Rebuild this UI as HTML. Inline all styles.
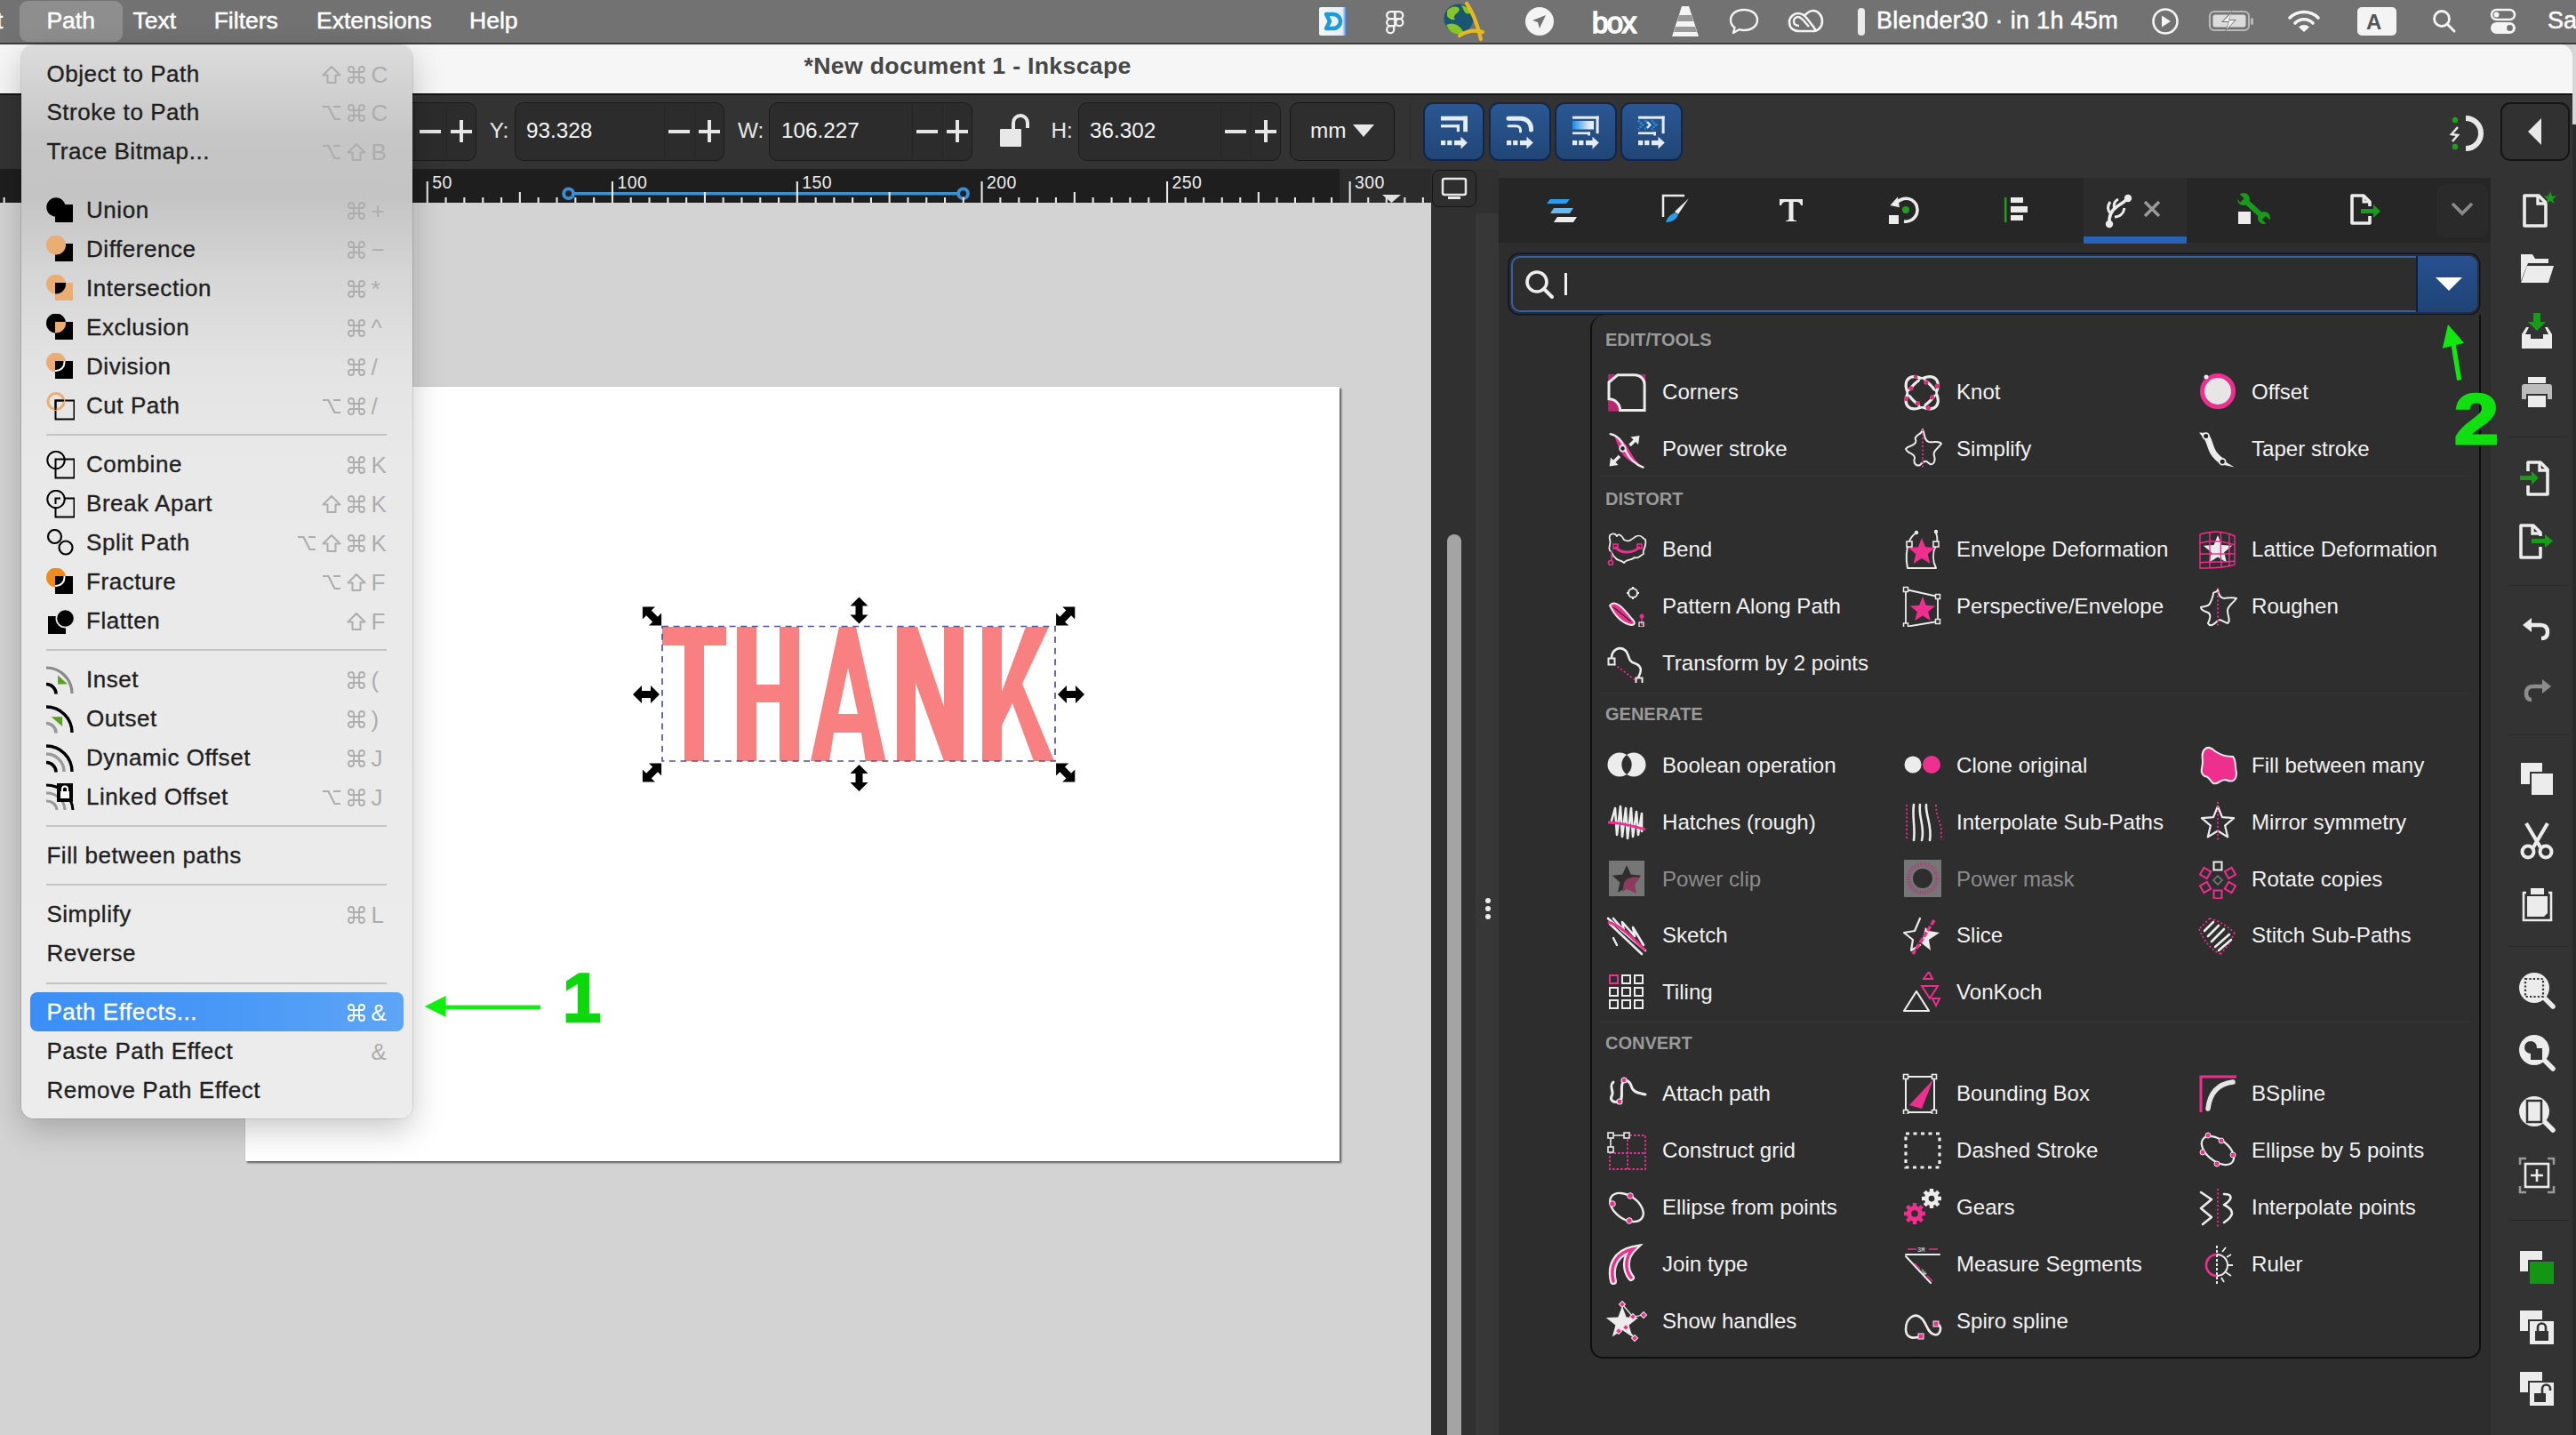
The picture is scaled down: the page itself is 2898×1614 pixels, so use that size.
<!DOCTYPE html><html><head><meta charset="utf-8"><style>html,body{margin:0;padding:0;}body{width:2898px;height:1614px;position:relative;overflow:hidden;background:#d3d3d3;font-family:"Liberation Sans",sans-serif;}</style></head><body>
<div style="position:absolute;left:0px;top:228px;width:1610px;height:1386px;background:#d3d3d3"></div>
<div style="position:absolute;left:276px;top:435px;width:1231px;height:871px;background:#fff;box-shadow:2px 2px 2px rgba(0,0,0,0.55), 0 0 1px rgba(0,0,0,0.25)"></div>
<svg style="position:absolute;left:0;top:0" width="2898" height="1614">
<g fill="#f88080">
<polygon points="745,705 817,705 817,726 792,726 792,856 770,856 770,726 745,726"/>
<polygon points="829,705 851,705 851,770 877,770 877,705 899,705 899,856 877,856 877,790 851,790 851,856 829,856"/>
<path d="M944,705 L963,705 L996.5,856 L973.7,856 L969,824 L938,824 L933,856 L912,856 Z M943,803 L965,803 L954,751 Z" fill-rule="evenodd"/>
<polygon points="1009,705 1032,705 1062,795 1062,705 1084,705 1084,856 1062,856 1030,768 1030,856 1009,856"/>
<polygon points="1105,705 1127,705 1127,778 1154,705 1180,705 1150,769 1186,856 1163,856 1139,791 1127,816 1127,856 1105,856"/>
</g>
<rect x="745" y="704.5" width="442" height="151.5" fill="none" stroke="#52529a" stroke-width="1.7" stroke-dasharray="7,5.6"/>
<polygon points="722.9,682.4 737.0,682.4 732.8,686.6 739.9,693.7 744.1,689.5 744.1,703.6 730.0,703.6 734.2,699.4 727.1,692.3 722.9,696.5" fill="#000"/><polygon points="1188.1,703.6 1188.1,689.5 1192.3,693.7 1199.4,686.6 1195.2,682.4 1209.3,682.4 1209.3,696.5 1205.1,692.3 1198.0,699.4 1202.2,703.6" fill="#000"/><polygon points="722.9,879.6 722.9,865.5 727.1,869.7 734.2,862.6 730.0,858.4 744.1,858.4 744.1,872.5 739.9,868.3 732.8,875.4 737.0,879.6" fill="#000"/><polygon points="1188.1,858.4 1202.2,858.4 1198.0,862.6 1205.1,869.7 1209.3,865.5 1209.3,879.6 1195.2,879.6 1199.4,875.4 1192.3,868.3 1188.1,872.5" fill="#000"/><polygon points="966.5,671.5 976.5,681.5 970.5,681.5 970.5,691.5 976.5,691.5 966.5,701.5 956.5,691.5 962.5,691.5 962.5,681.5 956.5,681.5" fill="#000"/><polygon points="966.5,860.0 976.5,870.0 970.5,870.0 970.5,880.0 976.5,880.0 966.5,890.0 956.5,880.0 962.5,880.0 962.5,870.0 956.5,870.0" fill="#000"/><polygon points="712.0,781.0 722.0,771.0 722.0,777.0 732.0,777.0 732.0,771.0 742.0,781.0 732.0,791.0 732.0,785.0 722.0,785.0 722.0,791.0" fill="#000"/><polygon points="1190.0,781.0 1200.0,771.0 1200.0,777.0 1210.0,777.0 1210.0,771.0 1220.0,781.0 1210.0,791.0 1210.0,785.0 1200.0,785.0 1200.0,791.0" fill="#000"/></svg>
<div style="position:absolute;left:0px;top:0px;width:2898px;height:49px;background:#727272"></div>
<div style="position:absolute;left:0px;top:48px;width:2898px;height:2px;background:#3c3c3c"></div>
<div style="position:absolute;left:22px;top:1px;width:116px;height:46px;background:#8e8e8e;border-radius:9px"></div>
<div style="position:absolute;left:-4px;top:9.57px;font-size:26.5px;line-height:26.5px;color:#fff;font-weight:400;white-space:pre;font-family:'Liberation Sans', sans-serif;-webkit-text-stroke:0.5px #fff">t</div>
<div style="position:absolute;left:52.4px;top:9.57px;font-size:26.5px;line-height:26.5px;color:#fff;font-weight:400;white-space:pre;font-family:'Liberation Sans', sans-serif;-webkit-text-stroke:0.5px #fff">Path</div>
<div style="position:absolute;left:149.5px;top:9.57px;font-size:26.5px;line-height:26.5px;color:#fff;font-weight:400;white-space:pre;font-family:'Liberation Sans', sans-serif;-webkit-text-stroke:0.5px #fff">Text</div>
<div style="position:absolute;left:240.7px;top:9.57px;font-size:26.5px;line-height:26.5px;color:#fff;font-weight:400;white-space:pre;font-family:'Liberation Sans', sans-serif;-webkit-text-stroke:0.5px #fff">Filters</div>
<div style="position:absolute;left:356px;top:9.57px;font-size:26.5px;line-height:26.5px;color:#fff;font-weight:400;white-space:pre;font-family:'Liberation Sans', sans-serif;-webkit-text-stroke:0.5px #fff">Extensions</div>
<div style="position:absolute;left:528px;top:9.57px;font-size:26.5px;line-height:26.5px;color:#fff;font-weight:400;white-space:pre;font-family:'Liberation Sans', sans-serif;-webkit-text-stroke:0.5px #fff">Help</div>
<div style="position:absolute;left:2111px;top:9.54px;font-size:27px;line-height:27px;color:#fff;font-weight:400;white-space:pre;font-family:'Liberation Sans', sans-serif;-webkit-text-stroke:0.5px #fff;letter-spacing:0.3px">Blender30 · in 1h 45m</div>
<div style="position:absolute;left:2866px;top:9.54px;font-size:27px;line-height:27px;color:#fff;font-weight:400;white-space:pre;font-family:'Liberation Sans', sans-serif;-webkit-text-stroke:0.5px #fff">Sa</div>
<div style="position:absolute;left:0px;top:50px;width:2894px;height:56px;background:#f6f6f6;border-top-right-radius:14px"></div>
<div style="position:absolute;left:2894px;top:50px;width:4px;height:1564px;background:#2a2a2a"></div>
<div style="position:absolute;left:2894px;top:50px;width:4px;height:90px;background:#d6d6d6"></div>
<div style="position:absolute;left:904.5px;top:60.90px;font-size:26.7px;line-height:26.7px;color:#474747;font-weight:700;white-space:pre;font-family:'Liberation Sans', sans-serif;letter-spacing:0.3px">*New document 1 - Inkscape</div>
<div style="position:absolute;left:0px;top:106px;width:2894px;height:84px;background:#333333"></div>
<div style="position:absolute;left:0px;top:105px;width:2894px;height:2px;background:#141414"></div>
<div style="position:absolute;left:0px;top:190px;width:1507px;height:38px;background:#1e1e1e"></div>
<div style="position:absolute;left:1507px;top:190px;width:103px;height:38px;background:#2b2b2b"></div>
<div style="position:absolute;left:1610px;top:190px;width:76px;height:1424px;background:#303030"></div>
<div style="position:absolute;left:1660px;top:240px;width:29px;height:1374px;background:#373737"></div>
<div style="position:absolute;left:400px;top:115px;width:135.5px;height:66px;background:#2c2c2c;border:1.5px solid #1b1b1b;border-radius:10px;box-sizing:border-box"></div><div style="position:absolute;left:467px;top:117px;width:1px;height:62px;background:#262626"></div><div style="position:absolute;left:501.6px;top:117px;width:1.0px;height:62px;background:#262626"></div><div style="position:absolute;left:472.3px;top:145.5px;width:24.0px;height:4.0px;background:#e6e6e6"></div><div style="position:absolute;left:506.54999999999995px;top:145.5px;width:24.0px;height:4.0px;background:#e6e6e6"></div><div style="position:absolute;left:516.55px;top:135px;width:4.0px;height:25px;background:#e6e6e6"></div>
<div style="position:absolute;left:550.7px;top:134.93px;font-size:24.3px;line-height:24.3px;color:#e8e8e8;font-weight:400;white-space:pre;font-family:'Liberation Sans', sans-serif;">Y:</div>
<div style="position:absolute;left:579px;top:115px;width:236px;height:66px;background:#2c2c2c;border:1.5px solid #1b1b1b;border-radius:10px;box-sizing:border-box"></div><div style="position:absolute;left:747px;top:117px;width:1px;height:62px;background:#262626"></div><div style="position:absolute;left:781px;top:117px;width:1px;height:62px;background:#262626"></div><div style="position:absolute;left:752.0px;top:145.5px;width:24.0px;height:4.0px;background:#e6e6e6"></div><div style="position:absolute;left:786.0px;top:145.5px;width:24.0px;height:4.0px;background:#e6e6e6"></div><div style="position:absolute;left:796.0px;top:135px;width:4.0px;height:25px;background:#e6e6e6"></div><div style="position:absolute;left:592px;top:134.93px;font-size:24.3px;line-height:24.3px;color:#f4f4f4;font-weight:400;white-space:pre;font-family:'Liberation Sans', sans-serif;">93.328</div>
<div style="position:absolute;left:830px;top:134.93px;font-size:24.3px;line-height:24.3px;color:#e8e8e8;font-weight:400;white-space:pre;font-family:'Liberation Sans', sans-serif;">W:</div>
<div style="position:absolute;left:865px;top:115px;width:229px;height:66px;background:#2c2c2c;border:1.5px solid #1b1b1b;border-radius:10px;box-sizing:border-box"></div><div style="position:absolute;left:1026px;top:117px;width:1px;height:62px;background:#262626"></div><div style="position:absolute;left:1060px;top:117px;width:1px;height:62px;background:#262626"></div><div style="position:absolute;left:1031.0px;top:145.5px;width:24.0px;height:4.0px;background:#e6e6e6"></div><div style="position:absolute;left:1065.0px;top:145.5px;width:24.0px;height:4.0px;background:#e6e6e6"></div><div style="position:absolute;left:1075.0px;top:135px;width:4.0px;height:25px;background:#e6e6e6"></div><div style="position:absolute;left:879px;top:134.93px;font-size:24.3px;line-height:24.3px;color:#f4f4f4;font-weight:400;white-space:pre;font-family:'Liberation Sans', sans-serif;">106.227</div>
<div style="position:absolute;left:1182.5px;top:134.93px;font-size:24.3px;line-height:24.3px;color:#e8e8e8;font-weight:400;white-space:pre;font-family:'Liberation Sans', sans-serif;">H:</div>
<div style="position:absolute;left:1213px;top:115px;width:228px;height:66px;background:#2c2c2c;border:1.5px solid #1b1b1b;border-radius:10px;box-sizing:border-box"></div><div style="position:absolute;left:1373.4px;top:117px;width:1.0px;height:62px;background:#262626"></div><div style="position:absolute;left:1406.8px;top:117px;width:1.0px;height:62px;background:#262626"></div><div style="position:absolute;left:1378.1px;top:145.5px;width:24.0px;height:4.0px;background:#e6e6e6"></div><div style="position:absolute;left:1411.9px;top:145.5px;width:24.0px;height:4.0px;background:#e6e6e6"></div><div style="position:absolute;left:1421.9px;top:135px;width:4.0px;height:25px;background:#e6e6e6"></div><div style="position:absolute;left:1226px;top:134.93px;font-size:24.3px;line-height:24.3px;color:#f4f4f4;font-weight:400;white-space:pre;font-family:'Liberation Sans', sans-serif;">36.302</div>
<svg style="position:absolute;left:1123px;top:128px;" width="38" height="40" viewBox="0 0 38 40"><rect x="2" y="17" width="24" height="20" fill="#e8e8e8" rx="1"/><path d="M17,17 V10 A8,8 0 0 1 33,10 V16" fill="none" stroke="#e8e8e8" stroke-width="4"/></svg>
<div style="position:absolute;left:1451px;top:115px;width:118px;height:66px;background:#2e2e2e;border:1.5px solid #161616;border-radius:10px;box-sizing:border-box"></div>
<div style="position:absolute;left:1474px;top:134.93px;font-size:24.3px;line-height:24.3px;color:#f0f0f0;font-weight:400;white-space:pre;font-family:'Liberation Sans', sans-serif;">mm</div>
<svg style="position:absolute;left:1521px;top:139px;" width="26" height="16" viewBox="0 0 26 16"><path d="M1,1 L25,1 L13,15 Z" fill="#e8e8e8"/></svg>
<div style="position:absolute;left:1586px;top:115px;width:1px;height:66px;background:#2b2b2b"></div>
<div style="position:absolute;left:1601px;top:115.4px;width:69px;height:65.6px;background:linear-gradient(#2a5793,#214677);border:2px solid #10264a;border-radius:11px;box-sizing:border-box"></div>
<svg style="position:absolute;left:1601px;top:115px;" width="70" height="66" viewBox="0 0 70 66"><rect x="20" y="15.7" width="30" height="4.8" fill="#e4ecf6"/><rect x="45.2" y="15.7" width="4.8" height="17.5" fill="#e4ecf6"/><rect x="20" y="25.2" width="21" height="3.2" fill="#e4ecf6"/><rect x="37.8" y="25.2" width="3.2" height="8" fill="#e4ecf6"/><rect x="20" y="43" width="5.2" height="5.2" fill="#e4ecf6"/><rect x="27.2" y="43" width="5.2" height="5.2" fill="#e4ecf6"/><path d="M35,43 H42.5 V38.8 L49.8,45.6 L42.5,52.6 V48.2 H35 Z" fill="#e4ecf6"/></svg>
<div style="position:absolute;left:1675px;top:115.4px;width:69.5px;height:65.6px;background:linear-gradient(#2a5793,#214677);border:2px solid #10264a;border-radius:11px;box-sizing:border-box"></div>
<svg style="position:absolute;left:1675px;top:115px;" width="70" height="66" viewBox="0 0 70 66"><path d="M22,18.2 H36 A11.5,11.5 0 0 1 47.5,29.7 V31" fill="none" stroke="#e4ecf6" stroke-width="5" stroke-linecap="round"/><path d="M22,26.8 H31 A4.5,4.5 0 0 1 35.5,31.3 V33" fill="none" stroke="#e4ecf6" stroke-width="3" stroke-linecap="round"/><rect x="20" y="43" width="5.2" height="5.2" fill="#e4ecf6"/><rect x="27.2" y="43" width="5.2" height="5.2" fill="#e4ecf6"/><path d="M35,43 H42.5 V38.8 L49.8,45.6 L42.5,52.6 V48.2 H35 Z" fill="#e4ecf6"/></svg>
<div style="position:absolute;left:1749px;top:115.4px;width:69.59999999999991px;height:65.6px;background:linear-gradient(#2a5793,#214677);border:2px solid #10264a;border-radius:11px;box-sizing:border-box"></div>
<svg style="position:absolute;left:1749px;top:115px;" width="70" height="66" viewBox="0 0 70 66"><defs><linearGradient id="bg3" x1="0" x2="1"><stop offset="0" stop-color="#1a8ae6"/><stop offset="0.75" stop-color="#d8e6f2"/><stop offset="1" stop-color="#eef2f8"/></linearGradient></defs><rect x="20" y="15.7" width="29.6" height="3" fill="#e4ecf6"/><rect x="46.6" y="15.7" width="3" height="19.5" fill="#e4ecf6"/><rect x="20" y="21" width="24" height="9.5" fill="url(#bg3)"/><rect x="20" y="33.5" width="20" height="2.6" fill="#e4ecf6"/><rect x="37.2" y="33.5" width="2.8" height="4" fill="#e4ecf6"/><rect x="20" y="43" width="5.2" height="5.2" fill="#e4ecf6"/><rect x="27.2" y="43" width="5.2" height="5.2" fill="#e4ecf6"/><path d="M35,43 H42.5 V38.8 L49.8,45.6 L42.5,52.6 V48.2 H35 Z" fill="#e4ecf6"/></svg>
<div style="position:absolute;left:1823px;top:115.4px;width:69.70000000000005px;height:65.6px;background:linear-gradient(#2a5793,#214677);border:2px solid #10264a;border-radius:11px;box-sizing:border-box"></div>
<svg style="position:absolute;left:1823px;top:115px;" width="70" height="66" viewBox="0 0 70 66"><rect x="20" y="15.7" width="29.6" height="3" fill="#e4ecf6"/><rect x="46.6" y="15.7" width="3" height="19.5" fill="#e4ecf6"/><path d="M20,20.5 l5,5 l-5,5 M27.5,20.5 l5,5 l-5,5 M35,20.5 l5,5 l-5,5" fill="none" stroke="#2a8fe0" stroke-width="2.6" stroke-dasharray="2,1.2"/><path d="M30,22 l3.5,3.5 l-3.5,3.5" fill="none" stroke="#e4ecf6" stroke-width="2.2"/><rect x="20" y="33.5" width="20" height="2.6" fill="#e4ecf6"/><rect x="37.2" y="33.5" width="2.8" height="4" fill="#e4ecf6"/><rect x="20" y="43" width="5.2" height="5.2" fill="#e4ecf6"/><rect x="27.2" y="43" width="5.2" height="5.2" fill="#e4ecf6"/><path d="M35,43 H42.5 V38.8 L49.8,45.6 L42.5,52.6 V48.2 H35 Z" fill="#e4ecf6"/></svg>
<svg style="position:absolute;left:2748px;top:126px;" width="52" height="48" viewBox="0 0 52 48"><path d="M26,7 A16,16 0 1 1 26,41" fill="none" stroke="#e8e8e8" stroke-width="6"/><circle cx="14" cy="9" r="3.2" fill="#1ea01e"/><circle cx="14" cy="39" r="3.2" fill="#1ea01e"/><path d="M17,17 L10,25 L17,26 L11,33" fill="none" stroke="#e8e8e8" stroke-width="2.5"/></svg>
<div style="position:absolute;left:2813px;top:115px;width:78px;height:66px;background:#313131;border:2px solid #151515;border-radius:11px;box-sizing:border-box"></div>
<svg style="position:absolute;left:2843px;top:132px;" width="18" height="32" viewBox="0 0 18 32"><path d="M16,1 V31 L1,16 Z" fill="#e8e8e8"/></svg>
<svg style="position:absolute;left:620px;top:200px;" width="480" height="36" viewBox="0 0 480 36"><path d="M19.6,17.75 H463.6" stroke="#3b90d0" stroke-width="3.6"/><circle cx="19.6" cy="17.75" r="5.4" fill="#1a2430" stroke="#3b90d0" stroke-width="3.8"/><circle cx="463.6" cy="17.75" r="5.4" fill="#1a2430" stroke="#3b90d0" stroke-width="3.8"/></svg>
<svg style="position:absolute;left:0px;top:0px;" width="1610" height="228" viewBox="0 0 1610 228"><rect x="479.7" y="204" width="2.1" height="24" fill="#e8e8e8"/><rect x="500.5" y="222" width="2.1" height="6" fill="#e8e8e8"/><rect x="521.3" y="222" width="2.1" height="6" fill="#e8e8e8"/><rect x="542.2" y="222" width="2.1" height="6" fill="#e8e8e8"/><rect x="563.0" y="222" width="2.1" height="6" fill="#e8e8e8"/><rect x="583.8" y="216" width="2.1" height="12" fill="#e8e8e8"/><rect x="604.6" y="222" width="2.1" height="6" fill="#e8e8e8"/><rect x="625.4" y="222" width="2.1" height="6" fill="#e8e8e8"/><rect x="646.3" y="222" width="2.1" height="6" fill="#e8e8e8"/><rect x="667.1" y="222" width="2.1" height="6" fill="#e8e8e8"/><rect x="687.9" y="204" width="2.1" height="24" fill="#e8e8e8"/><rect x="708.7" y="222" width="2.1" height="6" fill="#e8e8e8"/><rect x="729.5" y="222" width="2.1" height="6" fill="#e8e8e8"/><rect x="750.3" y="222" width="2.1" height="6" fill="#e8e8e8"/><rect x="771.1" y="222" width="2.1" height="6" fill="#e8e8e8"/><rect x="791.9" y="216" width="2.1" height="12" fill="#e8e8e8"/><rect x="812.6" y="222" width="2.1" height="6" fill="#e8e8e8"/><rect x="833.4" y="222" width="2.1" height="6" fill="#e8e8e8"/><rect x="854.2" y="222" width="2.1" height="6" fill="#e8e8e8"/><rect x="875.0" y="222" width="2.1" height="6" fill="#e8e8e8"/><rect x="895.8" y="204" width="2.1" height="24" fill="#e8e8e8"/><rect x="916.6" y="222" width="2.1" height="6" fill="#e8e8e8"/><rect x="937.3" y="222" width="2.1" height="6" fill="#e8e8e8"/><rect x="958.1" y="222" width="2.1" height="6" fill="#e8e8e8"/><rect x="978.9" y="222" width="2.1" height="6" fill="#e8e8e8"/><rect x="999.6" y="216" width="2.1" height="12" fill="#e8e8e8"/><rect x="1020.4" y="222" width="2.1" height="6" fill="#e8e8e8"/><rect x="1041.2" y="222" width="2.1" height="6" fill="#e8e8e8"/><rect x="1062.0" y="222" width="2.1" height="6" fill="#e8e8e8"/><rect x="1082.7" y="222" width="2.1" height="6" fill="#e8e8e8"/><rect x="1103.5" y="204" width="2.1" height="24" fill="#e8e8e8"/><rect x="1124.3" y="222" width="2.1" height="6" fill="#e8e8e8"/><rect x="1145.2" y="222" width="2.1" height="6" fill="#e8e8e8"/><rect x="1166.0" y="222" width="2.1" height="6" fill="#e8e8e8"/><rect x="1186.9" y="222" width="2.1" height="6" fill="#e8e8e8"/><rect x="1207.8" y="216" width="2.1" height="12" fill="#e8e8e8"/><rect x="1228.6" y="222" width="2.1" height="6" fill="#e8e8e8"/><rect x="1249.5" y="222" width="2.1" height="6" fill="#e8e8e8"/><rect x="1270.3" y="222" width="2.1" height="6" fill="#e8e8e8"/><rect x="1291.2" y="222" width="2.1" height="6" fill="#e8e8e8"/><rect x="1312.0" y="204" width="2.1" height="24" fill="#e8e8e8"/><rect x="1332.6" y="222" width="2.1" height="6" fill="#e8e8e8"/><rect x="1353.1" y="222" width="2.1" height="6" fill="#e8e8e8"/><rect x="1373.7" y="222" width="2.1" height="6" fill="#e8e8e8"/><rect x="1394.2" y="222" width="2.1" height="6" fill="#e8e8e8"/><rect x="1414.8" y="216" width="2.1" height="12" fill="#e8e8e8"/><rect x="1435.4" y="222" width="2.1" height="6" fill="#e8e8e8"/><rect x="1455.9" y="222" width="2.1" height="6" fill="#e8e8e8"/><rect x="1476.5" y="222" width="2.1" height="6" fill="#e8e8e8"/><rect x="1497.0" y="222" width="2.1" height="6" fill="#e8e8e8"/><rect x="1517.6" y="204" width="2.1" height="24" fill="#e8e8e8"/><rect x="459.0" y="222" width="2.1" height="6" fill="#e8e8e8"/><rect x="438.3" y="222" width="2.1" height="6" fill="#e8e8e8"/><rect x="417.6" y="222" width="2.1" height="6" fill="#e8e8e8"/><rect x="396.9" y="222" width="2.1" height="6" fill="#e8e8e8"/><rect x="376.2" y="216" width="2.1" height="12" fill="#e8e8e8"/><rect x="355.5" y="222" width="2.1" height="6" fill="#e8e8e8"/><rect x="334.8" y="222" width="2.1" height="6" fill="#e8e8e8"/><rect x="314.1" y="222" width="2.1" height="6" fill="#e8e8e8"/><rect x="293.4" y="222" width="2.1" height="6" fill="#e8e8e8"/><rect x="272.7" y="204" width="2.1" height="24" fill="#e8e8e8"/><rect x="252.0" y="222" width="2.1" height="6" fill="#e8e8e8"/><rect x="231.3" y="222" width="2.1" height="6" fill="#e8e8e8"/><rect x="210.6" y="222" width="2.1" height="6" fill="#e8e8e8"/><rect x="189.9" y="222" width="2.1" height="6" fill="#e8e8e8"/><rect x="169.2" y="216" width="2.1" height="12" fill="#e8e8e8"/><rect x="148.5" y="222" width="2.1" height="6" fill="#e8e8e8"/><rect x="127.8" y="222" width="2.1" height="6" fill="#e8e8e8"/><rect x="107.1" y="222" width="2.1" height="6" fill="#e8e8e8"/><rect x="86.4" y="222" width="2.1" height="6" fill="#e8e8e8"/><rect x="65.7" y="204" width="2.1" height="24" fill="#e8e8e8"/><rect x="45.0" y="222" width="2.1" height="6" fill="#e8e8e8"/><rect x="24.3" y="222" width="2.1" height="6" fill="#e8e8e8"/><rect x="3.6" y="222" width="2.1" height="6" fill="#e8e8e8"/><rect x="1538.2" y="222" width="2.1" height="6" fill="#e8e8e8"/><rect x="1558.7" y="222" width="2.1" height="6" fill="#e8e8e8"/><rect x="1579.3" y="222" width="2.1" height="6" fill="#e8e8e8"/><rect x="1599.8" y="222" width="2.1" height="6" fill="#e8e8e8"/></svg>
<div style="position:absolute;left:486.2px;top:196.09px;font-size:19.5px;line-height:19.5px;color:#ececec;font-weight:400;white-space:pre;font-family:'Liberation Sans', sans-serif;letter-spacing:0.4px">50</div>
<div style="position:absolute;left:694.4px;top:196.09px;font-size:19.5px;line-height:19.5px;color:#ececec;font-weight:400;white-space:pre;font-family:'Liberation Sans', sans-serif;letter-spacing:0.4px">100</div>
<div style="position:absolute;left:902.3px;top:196.09px;font-size:19.5px;line-height:19.5px;color:#ececec;font-weight:400;white-space:pre;font-family:'Liberation Sans', sans-serif;letter-spacing:0.4px">150</div>
<div style="position:absolute;left:1110.0px;top:196.09px;font-size:19.5px;line-height:19.5px;color:#ececec;font-weight:400;white-space:pre;font-family:'Liberation Sans', sans-serif;letter-spacing:0.4px">200</div>
<div style="position:absolute;left:1318.5px;top:196.09px;font-size:19.5px;line-height:19.5px;color:#ececec;font-weight:400;white-space:pre;font-family:'Liberation Sans', sans-serif;letter-spacing:0.4px">250</div>
<div style="position:absolute;left:1524.1px;top:196.09px;font-size:19.5px;line-height:19.5px;color:#ececec;font-weight:400;white-space:pre;font-family:'Liberation Sans', sans-serif;letter-spacing:0.4px">300</div>
<svg style="position:absolute;left:1555px;top:219px;" width="22" height="10" viewBox="0 0 22 10"><path d="M0,0 H21 L10.5,9 Z" fill="#e0e0e0"/></svg>
<div style="position:absolute;left:1611px;top:191px;width:50px;height:42px;background:#2e2e2e;border:1.5px solid #151515;border-radius:8px;box-sizing:border-box"></div>
<svg style="position:absolute;left:1620px;top:198px;" width="32" height="28" viewBox="0 0 32 28"><rect x="3" y="3" width="26" height="18" rx="2" fill="none" stroke="#e8e8e8" stroke-width="2.5"/><rect x="9" y="23" width="14" height="3" fill="#e8e8e8"/></svg>
<div style="position:absolute;left:1628px;top:601px;width:16.40000000000009px;height:1013px;background:#a4a4a4;border-radius:8px 8px 0 0"></div>
<svg style="position:absolute;left:1666px;top:1008px;" width="16" height="30" viewBox="0 0 16 30"><circle cx="8" cy="5" r="3" fill="#eee"/><circle cx="8" cy="14" r="3" fill="#eee"/><circle cx="8" cy="23" r="3" fill="#eee"/></svg>
<svg style="position:absolute;left:1482px;top:6px;" width="36" height="36" viewBox="0 0 36 36"><defs><linearGradient id="dl" x1="0" x2="1"><stop offset="0" stop-color="#f4f8fc"/><stop offset="0.85" stop-color="#e4ecf6"/><stop offset="1" stop-color="#2a6fd6"/></linearGradient></defs><rect x="2" y="2" width="31" height="32" rx="2" fill="url(#dl)"/><path d="M10,10 H18 A8,8 0 0 1 18,26 H10 L14,18 Z" fill="none" stroke="#1e9ad6" stroke-width="4.5" stroke-linejoin="round"/></svg>
<svg style="position:absolute;left:1557px;top:11px;" width="24" height="30" viewBox="0 0 24 30"><g fill="none" stroke="#f4f4f4" stroke-width="2.3"><path d="M12.25,2.2 H7.2 A4,4 0 0 0 7.2,10.2 H12.25 Z"/><path d="M12.25,2.2 H17.3 A4,4 0 0 1 17.3,10.2 H12.25 Z"/><path d="M12.25,10.2 H7.2 A4,4 0 0 0 7.2,18.2 H12.25 Z"/><circle cx="17.3" cy="14.2" r="4"/><path d="M12.25,18.2 H7.2 A4,4 0 1 0 11.2,22.2 V18.2"/></g></svg>
<svg style="position:absolute;left:1620px;top:0px;" width="52" height="48" viewBox="0 0 52 48"><circle cx="21" cy="21" r="16.5" fill="#1b5670"/><path d="M8,12 q5,-6 12,-4 q4,3 -1,7 q-5,3 -2,7 q-6,1 -9,-4 z M24,6 q7,1 11,8 q-3,3 -7,0 z M7,28 q6,-3 12,0 q5,3 8,9 q-8,3 -14,-1 q-4,-3 -6,-8z" fill="#86c52a"/><path d="M30,4 Q40,18 46,44" fill="none" stroke="#e8b820" stroke-width="4.2" stroke-linecap="round"/><path d="M22,40 Q34,32 48,36" fill="none" stroke="#e8b820" stroke-width="4.2" stroke-linecap="round"/></svg>
<svg style="position:absolute;left:1715px;top:7px;" width="34" height="34" viewBox="0 0 34 34"><circle cx="17" cy="17" r="16" fill="#f4f4f4"/><path d="M24,10 L9,16 L15,18 L17,25 Z" fill="#727272"/></svg>
<div style="position:absolute;left:1791px;top:8.57px;font-size:33px;line-height:33px;color:#fff;font-weight:400;white-space:pre;font-family:'Liberation Sans', sans-serif;-webkit-text-stroke:1.6px #fff;letter-spacing:-1.5px">box</div>
<svg style="position:absolute;left:1878px;top:5px;" width="36" height="38" viewBox="0 0 36 38"><path d="M14,2 H22 L33,36 H3 Z" fill="#f4f4f4"/><path d="M11,12 H25 L27,19 H9 Z M7,25 H29 L31,31 H5 Z" fill="#9a9a9a"/></svg>
<svg style="position:absolute;left:1944px;top:8px;" width="36" height="32" viewBox="0 0 36 32"><path d="M18,3 C27,3 33,8 33,14.5 C33,21 27,26 18,26 C16,26 14,25.7 12.5,25.2 L6,29 L7.5,23 C4.5,21 3,18 3,14.5 C3,8 9,3 18,3 Z" fill="none" stroke="#f4f4f4" stroke-width="2.4" stroke-linejoin="round"/></svg>
<svg style="position:absolute;left:2010px;top:8px;" width="42" height="32" viewBox="0 0 42 32"><path d="M14,27 C7,27 3,23 3,17 C3,11 8,7 13,7 C17,7 20,9 23,13 L30,22 C32,25 34,27 30,27 Z M20,10 C23,6 26,4 30,4 C35,4 40,9 40,16 C40,22 36,27 29,27" fill="none" stroke="#f4f4f4" stroke-width="2.6"/><path d="M14,21 C10,21 8,19 8,16 C8,13 10,11 13,11 C15,11 17,13 19,15 L25,22" fill="none" stroke="#f4f4f4" stroke-width="2.4"/></svg>
<div style="position:absolute;left:2089.5px;top:9px;width:8.5px;height:30.5px;background:#ececec;border-radius:4px"></div>
<svg style="position:absolute;left:2419px;top:8px;" width="34" height="32" viewBox="0 0 34 32"><circle cx="17" cy="16" r="13.5" fill="none" stroke="#f4f4f4" stroke-width="2.6"/><path d="M13,9.5 L23,16 L13,22.5 Z" fill="#f4f4f4"/></svg>
<svg style="position:absolute;left:2484px;top:10px;" width="56" height="28" viewBox="0 0 56 28"><rect x="2" y="3" width="44" height="21" rx="5" fill="none" stroke="#b8b8b8" stroke-width="2.2"/><rect x="48" y="10" width="3" height="8" rx="1.5" fill="#b8b8b8"/><rect x="5.5" y="6.5" width="37" height="14" rx="2.5" fill="#dcdcdc"/><path d="M27,2 L15,15 H23 L19,26 L32,12 H24 Z" fill="#727272"/><path d="M26,5 L17,14 H24 L21,23 L30,13 H23 Z" fill="#f4f4f4"/></svg>
<svg style="position:absolute;left:2573px;top:9px;" width="38" height="30" viewBox="0 0 38 30"><path d="M3,11 A23,23 0 0 1 35,11" fill="none" stroke="#f4f4f4" stroke-width="3.6" stroke-linecap="round"/><path d="M9,17 A14,14 0 0 1 29,17" fill="none" stroke="#f4f4f4" stroke-width="3.6" stroke-linecap="round"/><path d="M19,27 L13,21.5 A8.5,8.5 0 0 1 25,21.5 Z" fill="#f4f4f4"/></svg>
<div style="position:absolute;left:2651.6px;top:8px;width:44.40000000000009px;height:32px;background:#f4f4f4;border-radius:5px"></div>
<div style="position:absolute;left:2662px;top:12.68px;font-size:24px;line-height:24px;color:#555;font-weight:700;white-space:pre;font-family:'Liberation Sans', sans-serif;">A</div>
<svg style="position:absolute;left:2735px;top:9px;" width="30" height="30" viewBox="0 0 30 30"><circle cx="12" cy="12" r="8.5" fill="none" stroke="#f4f4f4" stroke-width="2.8"/><path d="M18,18 L26,26" stroke="#f4f4f4" stroke-width="3" stroke-linecap="round"/></svg>
<svg style="position:absolute;left:2800px;top:9px;" width="32" height="30" viewBox="0 0 32 30"><rect x="3" y="2" width="26" height="11" rx="5.5" fill="none" stroke="#f4f4f4" stroke-width="2.5"/><circle cx="8.5" cy="7.5" r="3" fill="#f4f4f4"/><rect x="2" y="16" width="28" height="13" rx="6.5" fill="#f4f4f4"/><circle cx="23.5" cy="22.5" r="3.4" fill="#727272"/></svg>
<div style="position:absolute;left:1686px;top:190px;width:1116px;height:10px;background:#333"></div>
<div style="position:absolute;left:1686px;top:200px;width:1116px;height:73px;background:#262626"></div>
<div style="position:absolute;left:1686px;top:273px;width:1116px;height:1341px;background:#2d2d2d"></div>
<div style="position:absolute;left:2802px;top:190px;width:92px;height:1424px;background:#333333"></div>
<div style="position:absolute;left:2344px;top:200px;width:116px;height:73px;background:#2c2c2c"></div>
<div style="position:absolute;left:2344px;top:266px;width:116px;height:8px;background:#2a62b5"></div>
<div style="position:absolute;left:2741px;top:207px;width:58px;height:60px;background:#2a2a2a;border-radius:9px"></div>
<svg style="position:absolute;left:2756px;top:224px;" width="28" height="22" viewBox="0 0 28 22"><path d="M3,5 L14,16 L25,5" fill="none" stroke="#8a8a8a" stroke-width="3.8"/></svg>
<div style="position:absolute;left:1698px;top:286px;width:1091px;height:67px;background:#2d2d2d;border-radius:11px;box-shadow:0 0 0 1.5px #0b1428;"></div>
<div style="position:absolute;left:1700px;top:288px;width:1087px;height:63px;border:2px solid #36609e;border-radius:10px;box-sizing:border-box"></div>
<div style="position:absolute;left:2718px;top:288px;width:69px;height:63px;background:linear-gradient(#27508e,#1f4377);border-top-right-radius:10px;border-bottom-right-radius:10px;border-left:2px solid #0e1f3d;box-sizing:border-box"></div>
<svg style="position:absolute;left:2738px;top:310px;" width="34" height="20" viewBox="0 0 34 20"><path d="M2,2 L32,2 L17,17 Z" fill="#fff"/></svg>
<svg style="position:absolute;left:1714px;top:302px;" width="38" height="38" viewBox="0 0 38 38"><circle cx="15" cy="15" r="11" fill="none" stroke="#eee" stroke-width="3.6"/><path d="M23,23 L32,32" stroke="#eee" stroke-width="4" stroke-linecap="round"/></svg>
<div style="position:absolute;left:1760px;top:307px;width:3px;height:25px;background:#eee"></div>
<div style="position:absolute;left:1789px;top:354px;width:1002px;height:1174px;background:#2e2e2e;border:2px solid #0f0f0f;border-radius:0 0 14px 14px;border-top-left-radius:16px;border-top:none;box-sizing:border-box"></div>
<div style="position:absolute;left:1800px;top:535px;width:980px;height:1px;background:#333333"></div>
<div style="position:absolute;left:1800px;top:779px;width:980px;height:1px;background:#333333"></div>
<div style="position:absolute;left:1800px;top:1149px;width:980px;height:1px;background:#333333"></div>
<div style="position:absolute;left:1806px;top:372.37px;font-size:20px;line-height:20px;color:#9a9a9a;font-weight:700;white-space:pre;font-family:'Liberation Sans', sans-serif;">EDIT/TOOLS</div>
<div style="position:absolute;left:1806px;top:550.87px;font-size:20px;line-height:20px;color:#9a9a9a;font-weight:700;white-space:pre;font-family:'Liberation Sans', sans-serif;">DISTORT</div>
<div style="position:absolute;left:1806px;top:792.87px;font-size:20px;line-height:20px;color:#9a9a9a;font-weight:700;white-space:pre;font-family:'Liberation Sans', sans-serif;">GENERATE</div>
<div style="position:absolute;left:1806px;top:1163.37px;font-size:20px;line-height:20px;color:#9a9a9a;font-weight:700;white-space:pre;font-family:'Liberation Sans', sans-serif;">CONVERT</div>
<div style="position:absolute;left:1870px;top:428.50px;font-size:24.1px;line-height:24.1px;color:#f2f2f2;font-weight:400;white-space:pre;font-family:'Liberation Sans', sans-serif;">Corners</div>
<svg style="position:absolute;left:1807px;top:417px;" width="46" height="46" viewBox="0 0 46 46"><rect x="2.2" y="3.9" width="11" height="11" fill="#b8286e"/><rect x="32.3" y="3.9" width="12" height="10" fill="#b8286e"/><rect x="2.2" y="31.8" width="12.5" height="13.8" fill="#b8286e"/><path d="M3,13 L13,4.7 H32.3 A10.8,10.8 0 0 1 43.1,15.5 V44.4 H15.6 A12.6,12.6 0 0 0 3,31.8 Z" fill="#2e2e2e" stroke="#ececec" stroke-width="3"/></svg>
<div style="position:absolute;left:2201px;top:428.50px;font-size:24.1px;line-height:24.1px;color:#f2f2f2;font-weight:400;white-space:pre;font-family:'Liberation Sans', sans-serif;">Knot</div>
<svg style="position:absolute;left:2140px;top:417px;" width="46" height="46" viewBox="0 0 46 46"><g transform="translate(22.2 24.8)"><ellipse rx="22" ry="13" transform="rotate(45)" fill="none" stroke="#ececec" stroke-width="3.2" stroke-linecap="round" stroke-linejoin="round"/><ellipse rx="22" ry="13" transform="rotate(-45)" fill="none" stroke="#ececec" stroke-width="3.2" stroke-linecap="round" stroke-linejoin="round"/><circle cx="-12.6" cy="0" r="2.6" fill="#2e2e2e"/><circle cx="12.6" cy="0" r="2.6" fill="#2e2e2e"/><circle cx="0" cy="-12.6" r="2.6" fill="#2e2e2e"/><circle cx="0" cy="12.6" r="2.6" fill="#2e2e2e"/></g><g fill="#d8337a"><circle cx="15.1" cy="6.8" r="2.3"/><circle cx="10.1" cy="19.8" r="2.6"/><circle cx="4.6" cy="31.5" r="2.6"/><circle cx="17.6" cy="36.5" r="2.6"/><circle cx="26.8" cy="13.1" r="2.6"/><circle cx="39.3" cy="17.2" r="2.6"/><circle cx="33.5" cy="29.8" r="2.6"/><circle cx="29.3" cy="41.5" r="2.6"/></g></svg>
<div style="position:absolute;left:2533px;top:428.50px;font-size:24.1px;line-height:24.1px;color:#f2f2f2;font-weight:400;white-space:pre;font-family:'Liberation Sans', sans-serif;">Offset</div>
<svg style="position:absolute;left:2472px;top:417px;" width="46" height="46" viewBox="0 0 46 46"><circle cx="23" cy="23" r="17.5" fill="#e6e6e6" stroke="#ee2f8e" stroke-width="5"/><circle cx="10" cy="7" r="2.5" fill="#eee"/></svg>
<div style="position:absolute;left:1870px;top:492.50px;font-size:24.1px;line-height:24.1px;color:#f2f2f2;font-weight:400;white-space:pre;font-family:'Liberation Sans', sans-serif;">Power stroke</div>
<svg style="position:absolute;left:1807px;top:481px;" width="46" height="46" viewBox="0 0 46 46"><path d="M9,9 C22,14 26,26 30,32 C33,37 36,40 40,43 C28,40 20,34 16,26 C13,20 11,14 9,9 Z" fill="#ee2f8e"/><path d="M4.7,7.1 C14,9 19,18 21,24 C25,34 32,41 41.5,44.6" fill="none" stroke="#ececec" stroke-width="2.4" stroke-linecap="round"/><circle cx="18.5" cy="23.4" r="3.2" fill="#222" stroke="#ececec" stroke-width="1.8"/><path d="M26.5,20 L32,14.5" stroke="#ececec" stroke-width="3.6"/><path d="M37.5,9 L27.5,10.5 L36,19 Z" fill="#ececec"/><path d="M15,32 L9,38" stroke="#ececec" stroke-width="3.6"/><path d="M3.6,43.4 L5,33.5 L13.6,42 Z" fill="#ececec"/></svg>
<div style="position:absolute;left:2201px;top:492.50px;font-size:24.1px;line-height:24.1px;color:#f2f2f2;font-weight:400;white-space:pre;font-family:'Liberation Sans', sans-serif;">Simplify</div>
<svg style="position:absolute;left:2140px;top:481px;" width="46" height="46" viewBox="0 0 46 46"><path d="M23,2 C26,8 24,14 30,16 C36,17 42,14 44,18 C40,24 34,26 36,32 C38,38 34,44 30,40 C26,36 24,38 20,42 C16,44 12,40 14,34 C14,28 6,30 4,24 C6,20 10,22 14,18 C18,14 12,12 16,10 C18,6 22,8 23,2 Z" fill="none" stroke="#ececec" stroke-width="2" stroke-linecap="round" stroke-linejoin="round"/><path d="M23,2 V46" stroke="#ee2f8e" stroke-width="1.8" stroke-dasharray="2,2.5"/></svg>
<div style="position:absolute;left:2533px;top:492.50px;font-size:24.1px;line-height:24.1px;color:#f2f2f2;font-weight:400;white-space:pre;font-family:'Liberation Sans', sans-serif;">Taper stroke</div>
<svg style="position:absolute;left:2472px;top:481px;" width="46" height="46" viewBox="0 0 46 46"><path d="M9.7,9.5 C14,14 14,22 18,28 C21,33 25,36 28.2,38.3" fill="none" stroke="#ececec" stroke-width="7"/><path d="M2,5.6 L11,6 L8,13 Z" fill="#ececec"/><path d="M26,35 L41.7,44.6 L30,42 Z" fill="#ececec"/><circle cx="9.7" cy="9.5" r="3.4" fill="#222" stroke="#ececec" stroke-width="1.8"/><circle cx="28.2" cy="38.3" r="3.4" fill="#222" stroke="#ececec" stroke-width="1.8"/></svg>
<div style="position:absolute;left:1870px;top:606.00px;font-size:24.1px;line-height:24.1px;color:#f2f2f2;font-weight:400;white-space:pre;font-family:'Liberation Sans', sans-serif;">Bend</div>
<svg style="position:absolute;left:1807px;top:594.5px;" width="46" height="46" viewBox="0 0 46 46"><path d="M4,12 C2,4 10,4 12,8 C14,4 18,8 20,12 C26,16 30,10 34,8 C40,6 40,10 44,12 C46,20 40,24 42,28 C38,30 36,34 32,32 C28,36 22,34 20,38 C16,34 12,36 10,32 C6,30 8,26 4,24 C2,20 6,16 4,12 Z" fill="none" stroke="#ececec" stroke-width="1.8" stroke-linecap="round" stroke-linejoin="round"/><path d="M10,20 C16,28 30,28 38,20" fill="none" stroke="#ee2f8e" stroke-width="3"/><rect x="8" y="17" width="5" height="5" fill="none" stroke="#ee2f8e" stroke-width="1.6"/><rect x="35" y="17" width="5" height="5" fill="none" stroke="#ee2f8e" stroke-width="1.6"/><path d="M6,24 V36" stroke="#ee2f8e" stroke-width="1.5"/><circle cx="5" cy="38" r="2.5" fill="none" stroke="#ee2f8e" stroke-width="1.6"/></svg>
<div style="position:absolute;left:2201px;top:606.00px;font-size:24.1px;line-height:24.1px;color:#f2f2f2;font-weight:400;white-space:pre;font-family:'Liberation Sans', sans-serif;">Envelope Deformation</div>
<svg style="position:absolute;left:2140px;top:594.5px;" width="46" height="46" viewBox="0 0 46 46"><path d="M8,14 C10,8 16,4 16,4 M38,4 C40,10 40,16 36,18 M8,14 C4,24 4,34 6,44 H38 C34,36 34,26 38,18" fill="none" stroke="#ececec" stroke-width="2" stroke-linecap="round" stroke-linejoin="round"/><polygon points="22.0,10.0 26.1,20.3 37.2,21.1 28.7,28.2 31.4,38.9 22.0,33.0 12.6,38.9 15.3,28.2 6.8,21.1 17.9,20.3" fill="#ee2f8e"/><rect x="5" y="14" width="6" height="6" fill="#2e2e2e" stroke="#ececec" stroke-width="1.6"/><rect x="35" y="14" width="6" height="6" fill="#2e2e2e" stroke="#ececec" stroke-width="1.6"/><circle cx="16" cy="4" r="2.2" fill="#ececec"/><circle cx="38" cy="3" r="2.2" fill="#ececec"/></svg>
<div style="position:absolute;left:2533px;top:606.00px;font-size:24.1px;line-height:24.1px;color:#f2f2f2;font-weight:400;white-space:pre;font-family:'Liberation Sans', sans-serif;">Lattice Deformation</div>
<svg style="position:absolute;left:2472px;top:594.5px;" width="46" height="46" viewBox="0 0 46 46"><polygon points="23.0,7.0 27.4,17.9 39.2,18.7 30.1,26.3 33.0,37.8 23.0,31.5 13.0,37.8 15.9,26.3 6.8,18.7 18.6,17.9" fill="#ececec"/><g fill="none" stroke="#ee2f8e" stroke-width="1.4"><path d="M3,6 C14,2 30,2 42,8 V40 C30,44 14,44 3,44 Z"/><path d="M14,4 V44 M26,3 C28,16 24,30 28,44 M36,5 V42 M3,16 C16,12 30,14 42,18 M3,28 H42 M3,38 C16,36 30,38 42,36"/></g></svg>
<div style="position:absolute;left:1870px;top:670.00px;font-size:24.1px;line-height:24.1px;color:#f2f2f2;font-weight:400;white-space:pre;font-family:'Liberation Sans', sans-serif;">Pattern Along Path</div>
<svg style="position:absolute;left:1807px;top:658.5px;" width="46" height="46" viewBox="0 0 46 46"><path d="M4,22 C10,14 20,26 28,36 C32,40 34,44 28,44 C18,42 10,34 4,22 Z" fill="#ee2f8e" stroke="#ececec" stroke-width="2"/><path d="M8,24 C14,28 22,36 28,40" fill="none" stroke="#2e2e2e" stroke-width="1.5"/><circle cx="30" cy="8" r="5" fill="none" stroke="#ececec" stroke-width="2" stroke-linecap="round" stroke-linejoin="round"/><path d="M30,1 V3 M30,13 V15 M23,8 H25 M35,8 H37" stroke="#ececec" stroke-width="2"/><circle cx="40" cy="34" r="2.5" fill="#ee2f8e"/><path d="M40,36 V44" stroke="#ee2f8e" stroke-width="1.5"/><rect x="37" y="41" width="5" height="5" fill="none" stroke="#ececec" stroke-width="1.3"/></svg>
<div style="position:absolute;left:2201px;top:670.00px;font-size:24.1px;line-height:24.1px;color:#f2f2f2;font-weight:400;white-space:pre;font-family:'Liberation Sans', sans-serif;">Perspective/Envelope</div>
<svg style="position:absolute;left:2140px;top:658.5px;" width="46" height="46" viewBox="0 0 46 46"><path d="M4,4 L40,12 L40,40 L4,46 Z" fill="none" stroke="#ececec" stroke-width="1.8" stroke-linecap="round" stroke-linejoin="round"/><polygon points="23.0,12.0 26.8,21.7 37.3,22.4 29.2,29.0 31.8,39.1 23.0,33.5 14.2,39.1 16.8,29.0 8.7,22.4 19.2,21.7" fill="#ee2f8e"/><g fill="#2e2e2e" stroke="#ececec" stroke-width="1.5"><rect x="1.5" y="1.5" width="5" height="5"/><rect x="37.5" y="9.5" width="5" height="5"/><rect x="37.5" y="37.5" width="5" height="5"/><rect x="1.5" y="42" width="5" height="5"/></g></svg>
<div style="position:absolute;left:2533px;top:670.00px;font-size:24.1px;line-height:24.1px;color:#f2f2f2;font-weight:400;white-space:pre;font-family:'Liberation Sans', sans-serif;">Roughen</div>
<svg style="position:absolute;left:2472px;top:658.5px;" width="46" height="46" viewBox="0 0 46 46"><path d="M23,4 C24,10 26,14 30,14 C34,14 38,12 44,14 C40,20 34,22 34,28 C34,34 38,40 34,42 C28,40 26,36 22,40 C18,44 14,46 12,42 C14,38 16,32 12,30 C8,28 4,28 4,24 C8,22 12,24 14,20 C16,16 18,12 18,8 C20,6 22,8 23,4 Z" fill="none" stroke="#ececec" stroke-width="2" stroke-linecap="round" stroke-linejoin="round"/><path d="M23,2 V46" stroke="#ee2f8e" stroke-width="1.8" stroke-dasharray="2,2.5"/></svg>
<div style="position:absolute;left:1870px;top:733.50px;font-size:24.1px;line-height:24.1px;color:#f2f2f2;font-weight:400;white-space:pre;font-family:'Liberation Sans', sans-serif;">Transform by 2 points</div>
<svg style="position:absolute;left:1807px;top:722px;" width="46" height="46" viewBox="0 0 46 46"><path d="M6,20 C5,8 16,4 22,10 C26,14 24,22 32,24 C40,27 40,32 37,38 C35,41 36,43 37,44" fill="none" stroke="#ececec" stroke-width="2.6" stroke-linecap="round" stroke-linejoin="round"/><path d="M9,25 L33,43" stroke="#ee2f8e" stroke-width="1.8" stroke-dasharray="2,2.5"/><rect x="2.5" y="18.5" width="7" height="7" fill="#2e2e2e" stroke="#ececec" stroke-width="2"/><rect x="33.5" y="40.5" width="7" height="7" fill="#2e2e2e" stroke="#ececec" stroke-width="2"/></svg>
<div style="position:absolute;left:1870px;top:848.50px;font-size:24.1px;line-height:24.1px;color:#f2f2f2;font-weight:400;white-space:pre;font-family:'Liberation Sans', sans-serif;">Boolean operation</div>
<svg style="position:absolute;left:1807px;top:837px;" width="46" height="46" viewBox="0 0 46 46"><circle cx="15" cy="23" r="13.5" fill="#ececec"/><circle cx="31" cy="23" r="13.5" fill="#ececec"/><path d="M23,12 A13.5,13.5 0 0 1 23,34 A13.5,13.5 0 0 1 23,12 Z" fill="#2e2e2e"/></svg>
<div style="position:absolute;left:2201px;top:848.50px;font-size:24.1px;line-height:24.1px;color:#f2f2f2;font-weight:400;white-space:pre;font-family:'Liberation Sans', sans-serif;">Clone original</div>
<svg style="position:absolute;left:2140px;top:837px;" width="46" height="46" viewBox="0 0 46 46"><circle cx="12" cy="23" r="9.5" fill="#ececec"/><circle cx="33" cy="23" r="10" fill="#ee2f8e"/></svg>
<div style="position:absolute;left:2533px;top:848.50px;font-size:24.1px;line-height:24.1px;color:#f2f2f2;font-weight:400;white-space:pre;font-family:'Liberation Sans', sans-serif;">Fill between many</div>
<svg style="position:absolute;left:2472px;top:837px;" width="46" height="46" viewBox="0 0 46 46"><path d="M8,6 C12,2 16,4 20,8 C26,12 32,14 40,14 C44,18 42,26 44,32 C44,40 40,44 32,40 C24,40 24,46 18,44 C14,42 14,36 8,36 C2,32 6,26 6,20 C6,14 4,10 8,6 Z" fill="#ee2f8e" stroke="#ececec" stroke-width="2"/></svg>
<div style="position:absolute;left:1870px;top:912.50px;font-size:24.1px;line-height:24.1px;color:#f2f2f2;font-weight:400;white-space:pre;font-family:'Liberation Sans', sans-serif;">Hatches (rough)</div>
<svg style="position:absolute;left:1807px;top:901px;" width="46" height="46" viewBox="0 0 46 46"><path d="M6,22 L10,8 L12,38 L16,6 L18,40 L22,8 L24,42 L28,8 L30,40 L34,12 L36,38 L40,14 L40,34" fill="none" stroke="#ececec" stroke-width="2.6" stroke-linecap="round" stroke-linejoin="round"/><path d="M2,24 C12,24 30,28 44,32" fill="none" stroke="#ee2f8e" stroke-width="3"/></svg>
<div style="position:absolute;left:2201px;top:912.50px;font-size:24.1px;line-height:24.1px;color:#f2f2f2;font-weight:400;white-space:pre;font-family:'Liberation Sans', sans-serif;">Interpolate Sub-Paths</div>
<svg style="position:absolute;left:2140px;top:901px;" width="46" height="46" viewBox="0 0 46 46"><path d="M5,4 V44 M38,4 C38,18 44,24 44,34 V44" stroke="#ee2f8e" stroke-width="1.8" stroke-dasharray="2,2.5" fill="none"/><path d="M13,4 C11,18 15,30 13,44 M20,4 C18,18 26,30 22,44 M27,4 C26,16 34,28 31,44" fill="none" stroke="#ececec" stroke-width="2.6" stroke-linecap="round" stroke-linejoin="round"/></svg>
<div style="position:absolute;left:2533px;top:912.50px;font-size:24.1px;line-height:24.1px;color:#f2f2f2;font-weight:400;white-space:pre;font-family:'Liberation Sans', sans-serif;">Mirror symmetry</div>
<svg style="position:absolute;left:2472px;top:901px;" width="46" height="46" viewBox="0 0 46 46"><polygon points="23.0,6.0 28.0,18.1 41.1,19.1 31.1,27.6 34.2,40.4 23.0,33.5 11.8,40.4 14.9,27.6 4.9,19.1 18.0,18.1" fill="none" stroke="#ececec" stroke-width="2.2" stroke-linecap="round" stroke-linejoin="round"/><path d="M23,1 V46" stroke="#ee2f8e" stroke-width="1.8" stroke-dasharray="2,2.5"/></svg>
<div style="position:absolute;left:1870px;top:976.50px;font-size:24.1px;line-height:24.1px;color:#8c8c8c;font-weight:400;white-space:pre;font-family:'Liberation Sans', sans-serif;">Power clip</div>
<svg style="position:absolute;left:1807px;top:965px;" width="46" height="46" viewBox="0 0 46 46"><rect x="3" y="3" width="40" height="40" fill="#767676"/><polygon points="23.0,8.0 27.7,18.5 39.2,19.7 30.6,27.5 33.0,38.8 23.0,33.0 13.0,38.8 15.4,27.5 6.8,19.7 18.3,18.5" fill="#2e2e2e"/><path d="M23,24 C30,20 36,22 38,22 L32,30 L34,40 L23,35 L18,38 C20,34 18,28 23,24 Z" fill="#8e3a60"/></svg>
<div style="position:absolute;left:2201px;top:976.50px;font-size:24.1px;line-height:24.1px;color:#8c8c8c;font-weight:400;white-space:pre;font-family:'Liberation Sans', sans-serif;">Power mask</div>
<svg style="position:absolute;left:2140px;top:965px;" width="46" height="46" viewBox="0 0 46 46"><rect x="2" y="2" width="42" height="42" fill="#767676"/><circle cx="23" cy="23" r="16" fill="none" stroke="#a04a78" stroke-width="5" stroke-dasharray="1.5,1.5"/><circle cx="23" cy="23" r="11" fill="#2e2e2e"/></svg>
<div style="position:absolute;left:2533px;top:976.50px;font-size:24.1px;line-height:24.1px;color:#f2f2f2;font-weight:400;white-space:pre;font-family:'Liberation Sans', sans-serif;">Rotate copies</div>
<svg style="position:absolute;left:2472px;top:965px;" width="46" height="46" viewBox="0 0 46 46"><rect x="18.5" y="4.5" width="9" height="9" fill="none" stroke="#ececec" stroke-width="2" transform="rotate(0 23.0 9.0)"/><rect x="32.4" y="12.5" width="9" height="9" fill="none" stroke="#ee2f8e" stroke-width="2" transform="rotate(60 36.9 17.0)"/><rect x="32.4" y="28.5" width="9" height="9" fill="none" stroke="#ee2f8e" stroke-width="2" transform="rotate(120 36.9 33.0)"/><rect x="18.5" y="36.5" width="9" height="9" fill="none" stroke="#ee2f8e" stroke-width="2" transform="rotate(180 23.0 41.0)"/><rect x="4.6" y="28.5" width="9" height="9" fill="none" stroke="#ee2f8e" stroke-width="2" transform="rotate(240 9.1 33.0)"/><rect x="4.6" y="12.5" width="9" height="9" fill="none" stroke="#ee2f8e" stroke-width="2" transform="rotate(300 9.1 17.0)"/><rect x="19.5" y="21.5" width="7" height="7" fill="none" stroke="#777" stroke-width="1.6" transform="rotate(45 23 25)"/></svg>
<div style="position:absolute;left:1870px;top:1040.00px;font-size:24.1px;line-height:24.1px;color:#f2f2f2;font-weight:400;white-space:pre;font-family:'Liberation Sans', sans-serif;">Sketch</div>
<svg style="position:absolute;left:1807px;top:1028.5px;" width="46" height="46" viewBox="0 0 46 46"><path d="M2,4 L44,40 M4,10 L40,44 M8,4 L20,18 L18,8 L32,24 L30,14 L42,34" fill="none" stroke="#ececec" stroke-width="2.6" stroke-linecap="round" stroke-linejoin="round"/><path d="M2,8 C16,12 28,24 44,40" fill="none" stroke="#ee2f8e" stroke-width="3"/><path d="M8,26 L12,34" fill="none" stroke="#ececec" stroke-width="2.4" stroke-linecap="round" stroke-linejoin="round"/></svg>
<div style="position:absolute;left:2201px;top:1040.00px;font-size:24.1px;line-height:24.1px;color:#f2f2f2;font-weight:400;white-space:pre;font-family:'Liberation Sans', sans-serif;">Slice</div>
<svg style="position:absolute;left:2140px;top:1028.5px;" width="46" height="46" viewBox="0 0 46 46"><path d="M20,4 L14,18 L2,20 L12,28 L10,40 L20,34" fill="none" stroke="#ececec" stroke-width="2.2" stroke-linecap="round" stroke-linejoin="round"/><path d="M22,32 L32,40 L30,28 L42,20 L30,18" fill="#ececec"/><path d="M26,14 L30,18 L22,32 Z" fill="#ececec"/><path d="M36,6 L12,44" stroke="#ee2f8e" stroke-width="3.5" stroke-dasharray="6,2"/></svg>
<div style="position:absolute;left:2533px;top:1040.00px;font-size:24.1px;line-height:24.1px;color:#f2f2f2;font-weight:400;white-space:pre;font-family:'Liberation Sans', sans-serif;">Stitch Sub-Paths</div>
<svg style="position:absolute;left:2472px;top:1028.5px;" width="46" height="46" viewBox="0 0 46 46"><path d="M14,4 C22,6 30,10 42,20 M2,16 C8,30 16,40 26,44 M42,20 C38,28 34,36 26,44 M14,4 C10,8 6,12 2,16" stroke="#ee2f8e" stroke-width="1.8" stroke-dasharray="2,2.5" fill="none"/><path d="M8,18 L18,8 M12,24 L24,12 M16,30 L30,16 M20,36 L36,22 M24,40 L38,28" fill="none" stroke="#ececec" stroke-width="2.6" stroke-linecap="round" stroke-linejoin="round"/></svg>
<div style="position:absolute;left:1870px;top:1104.00px;font-size:24.1px;line-height:24.1px;color:#f2f2f2;font-weight:400;white-space:pre;font-family:'Liberation Sans', sans-serif;">Tiling</div>
<svg style="position:absolute;left:1807px;top:1092.5px;" width="46" height="46" viewBox="0 0 46 46"><rect x="4" y="4" width="9" height="9" fill="none" stroke="#ee2f8e" stroke-width="2"/><rect x="18" y="4" width="9" height="9" fill="none" stroke="#ececec" stroke-width="2"/><rect x="32" y="4" width="9" height="9" fill="none" stroke="#ececec" stroke-width="2"/><rect x="4" y="18" width="9" height="9" fill="none" stroke="#ececec" stroke-width="2"/><rect x="18" y="18" width="9" height="9" fill="none" stroke="#ececec" stroke-width="2"/><rect x="32" y="18" width="9" height="9" fill="none" stroke="#ececec" stroke-width="2"/><rect x="4" y="32" width="9" height="9" fill="none" stroke="#ececec" stroke-width="2"/><rect x="18" y="32" width="9" height="9" fill="none" stroke="#ececec" stroke-width="2"/><rect x="32" y="32" width="9" height="9" fill="none" stroke="#ececec" stroke-width="2"/></svg>
<div style="position:absolute;left:2201px;top:1104.00px;font-size:24.1px;line-height:24.1px;color:#f2f2f2;font-weight:400;white-space:pre;font-family:'Liberation Sans', sans-serif;">VonKoch</div>
<svg style="position:absolute;left:2140px;top:1092.5px;" width="46" height="46" viewBox="0 0 46 46"><path d="M2,44 L16,22 L30,44 Z" fill="none" stroke="#ececec" stroke-width="2.2" stroke-linecap="round" stroke-linejoin="round"/><path d="M24,8 L30,0 L34,8 Z M22,16 H40 L31,30 Z M34,30 L42,30 L38,38 Z" fill="none" stroke="#ee2f8e" stroke-width="2"/><path d="M30,44 L38,44 L34,36 Z" fill="none" stroke="#ee2f8e" stroke-width="2" opacity="0"/></svg>
<div style="position:absolute;left:1870px;top:1218.00px;font-size:24.1px;line-height:24.1px;color:#f2f2f2;font-weight:400;white-space:pre;font-family:'Liberation Sans', sans-serif;">Attach path</div>
<svg style="position:absolute;left:1807px;top:1206.5px;" width="46" height="46" viewBox="0 0 46 46"><path d="M8,10 C2,16 10,20 6,26 C4,30 8,34 14,32 C20,30 16,20 18,12 C20,6 26,8 28,14 C30,22 36,22 44,24" fill="none" stroke="#ececec" stroke-width="3" stroke-linecap="round" stroke-linejoin="round"/><circle cx="20" cy="8" r="3" fill="#ee2f8e" stroke="#ececec" stroke-width="1.2"/><circle cx="15" cy="32" r="3" fill="#ee2f8e" stroke="#ececec" stroke-width="1.2"/></svg>
<div style="position:absolute;left:2201px;top:1218.00px;font-size:24.1px;line-height:24.1px;color:#f2f2f2;font-weight:400;white-space:pre;font-family:'Liberation Sans', sans-serif;">Bounding Box</div>
<svg style="position:absolute;left:2140px;top:1206.5px;" width="46" height="46" viewBox="0 0 46 46"><rect x="4" y="4" width="32" height="40" fill="none" stroke="#ececec" stroke-width="2" stroke-linecap="round" stroke-linejoin="round"/><path d="M35,7 L8,36 L22,40 Z" fill="#ee2f8e"/><g fill="#2e2e2e" stroke="#ececec" stroke-width="1.6"><rect x="1.5" y="1.5" width="5" height="5"/><rect x="33.5" y="1.5" width="5" height="5"/><rect x="1.5" y="41.5" width="5" height="5"/><rect x="33.5" y="41.5" width="5" height="5"/></g></svg>
<div style="position:absolute;left:2533px;top:1218.00px;font-size:24.1px;line-height:24.1px;color:#f2f2f2;font-weight:400;white-space:pre;font-family:'Liberation Sans', sans-serif;">BSpline</div>
<svg style="position:absolute;left:2472px;top:1206.5px;" width="46" height="46" viewBox="0 0 46 46"><path d="M4,44 V4 H44" fill="none" stroke="#ee2f8e" stroke-width="3"/><path d="M12,40 C14,22 24,12 40,10" fill="none" stroke="#e6e6e6" stroke-width="5.5" stroke-linecap="round" stroke-linejoin="round"/></svg>
<div style="position:absolute;left:1870px;top:1282.00px;font-size:24.1px;line-height:24.1px;color:#f2f2f2;font-weight:400;white-space:pre;font-family:'Liberation Sans', sans-serif;">Construct grid</div>
<svg style="position:absolute;left:1807px;top:1270.5px;" width="46" height="46" viewBox="0 0 46 46"><path d="M4,20 V44 H44 V6 H22 M4,26 H44 M24,6 V44" fill="none" stroke="#ee2f8e" stroke-width="1.8" stroke-dasharray="2.5,2"/><path d="M5,6 H22 M5,6 V20" stroke="#ececec" stroke-width="1.6"/><g fill="#2e2e2e" stroke="#ececec" stroke-width="1.6"><rect x="2" y="3" width="6" height="6"/><rect x="20" y="3" width="6" height="6"/><rect x="2" y="19" width="6" height="6"/></g></svg>
<div style="position:absolute;left:2201px;top:1282.00px;font-size:24.1px;line-height:24.1px;color:#f2f2f2;font-weight:400;white-space:pre;font-family:'Liberation Sans', sans-serif;">Dashed Stroke</div>
<svg style="position:absolute;left:2140px;top:1270.5px;" width="46" height="46" viewBox="0 0 46 46"><rect x="4" y="4" width="38" height="38" fill="none" stroke="#ececec" stroke-width="3.2" stroke-dasharray="4,4.5"/></svg>
<div style="position:absolute;left:2533px;top:1282.00px;font-size:24.1px;line-height:24.1px;color:#f2f2f2;font-weight:400;white-space:pre;font-family:'Liberation Sans', sans-serif;">Ellipse by 5 points</div>
<svg style="position:absolute;left:2472px;top:1270.5px;" width="46" height="46" viewBox="0 0 46 46"><ellipse cx="23" cy="23" rx="21" ry="12" transform="rotate(38 23 23)" fill="none" stroke="#ececec" stroke-width="2.2" stroke-linecap="round" stroke-linejoin="round"/><g fill="#ee2f8e" stroke="#ececec" stroke-width="1"><circle cx="12" cy="6" r="3"/><circle cx="27" cy="12" r="3"/><circle cx="6" cy="25" r="3"/><circle cx="40" cy="28" r="3"/><circle cx="22" cy="38" r="3"/></g></svg>
<div style="position:absolute;left:1870px;top:1346.00px;font-size:24.1px;line-height:24.1px;color:#f2f2f2;font-weight:400;white-space:pre;font-family:'Liberation Sans', sans-serif;">Ellipse from points</div>
<svg style="position:absolute;left:1807px;top:1334.5px;" width="46" height="46" viewBox="0 0 46 46"><ellipse cx="23" cy="23" rx="21" ry="13" transform="rotate(35 23 23)" fill="none" stroke="#ececec" stroke-width="2.4" stroke-linecap="round" stroke-linejoin="round"/><g fill="#ee2f8e" stroke="#ececec" stroke-width="1"><circle cx="27" cy="10" r="3.3"/><circle cx="7" cy="19" r="3.3"/><circle cx="26" cy="38" r="3.3"/></g></svg>
<div style="position:absolute;left:2201px;top:1346.00px;font-size:24.1px;line-height:24.1px;color:#f2f2f2;font-weight:400;white-space:pre;font-family:'Liberation Sans', sans-serif;">Gears</div>
<svg style="position:absolute;left:2140px;top:1334.5px;" width="46" height="46" viewBox="0 0 46 46"><rect x="11.8" y="18" width="4.4" height="5.5" fill="#ee2f8e" transform="rotate(0.0 14 30)"/><rect x="11.8" y="18" width="4.4" height="5.5" fill="#ee2f8e" transform="rotate(45.0 14 30)"/><rect x="11.8" y="18" width="4.4" height="5.5" fill="#ee2f8e" transform="rotate(90.0 14 30)"/><rect x="11.8" y="18" width="4.4" height="5.5" fill="#ee2f8e" transform="rotate(135.0 14 30)"/><rect x="11.8" y="18" width="4.4" height="5.5" fill="#ee2f8e" transform="rotate(180.0 14 30)"/><rect x="11.8" y="18" width="4.4" height="5.5" fill="#ee2f8e" transform="rotate(225.0 14 30)"/><rect x="11.8" y="18" width="4.4" height="5.5" fill="#ee2f8e" transform="rotate(270.0 14 30)"/><rect x="11.8" y="18" width="4.4" height="5.5" fill="#ee2f8e" transform="rotate(315.0 14 30)"/><circle cx="14" cy="30" r="9.0" fill="#ee2f8e"/><circle cx="14" cy="30" r="3.825" fill="#2e2e2e"/><rect x="30.8" y="2" width="4.4" height="5.5" fill="#ececec" transform="rotate(0.0 33 13)"/><rect x="30.8" y="2" width="4.4" height="5.5" fill="#ececec" transform="rotate(45.0 33 13)"/><rect x="30.8" y="2" width="4.4" height="5.5" fill="#ececec" transform="rotate(90.0 33 13)"/><rect x="30.8" y="2" width="4.4" height="5.5" fill="#ececec" transform="rotate(135.0 33 13)"/><rect x="30.8" y="2" width="4.4" height="5.5" fill="#ececec" transform="rotate(180.0 33 13)"/><rect x="30.8" y="2" width="4.4" height="5.5" fill="#ececec" transform="rotate(225.0 33 13)"/><rect x="30.8" y="2" width="4.4" height="5.5" fill="#ececec" transform="rotate(270.0 33 13)"/><rect x="30.8" y="2" width="4.4" height="5.5" fill="#ececec" transform="rotate(315.0 33 13)"/><circle cx="33" cy="13" r="8.0" fill="#ececec"/><circle cx="33" cy="13" r="3.375" fill="#2e2e2e"/></svg>
<div style="position:absolute;left:2533px;top:1346.00px;font-size:24.1px;line-height:24.1px;color:#f2f2f2;font-weight:400;white-space:pre;font-family:'Liberation Sans', sans-serif;">Interpolate points</div>
<svg style="position:absolute;left:2472px;top:1334.5px;" width="46" height="46" viewBox="0 0 46 46"><path d="M23,2 V46" stroke="#ee2f8e" stroke-width="1.8" stroke-dasharray="2,2.5"/><path d="M4,6 L16,14 L4,24 L16,34 L6,42" fill="none" stroke="#ececec" stroke-width="2.6" stroke-linecap="round" stroke-linejoin="round"/><path d="M30,8 C40,8 40,14 30,20 C42,26 42,32 30,40" fill="none" stroke="#ececec" stroke-width="2.6" stroke-linecap="round" stroke-linejoin="round"/></svg>
<div style="position:absolute;left:1870px;top:1410.00px;font-size:24.1px;line-height:24.1px;color:#f2f2f2;font-weight:400;white-space:pre;font-family:'Liberation Sans', sans-serif;">Join type</div>
<svg style="position:absolute;left:1807px;top:1398.5px;" width="46" height="46" viewBox="0 0 46 46"><path d="M8,42 C4,26 10,10 30,6 C22,14 20,28 28,38" fill="none" stroke="#ececec" stroke-width="8" stroke-linecap="round"/><path d="M8,42 C4,26 10,10 30,6 C22,14 20,28 28,38" fill="none" stroke="#ee2f8e" stroke-width="3.5" stroke-linecap="round"/></svg>
<div style="position:absolute;left:2201px;top:1410.00px;font-size:24.1px;line-height:24.1px;color:#f2f2f2;font-weight:400;white-space:pre;font-family:'Liberation Sans', sans-serif;">Measure Segments</div>
<svg style="position:absolute;left:2140px;top:1398.5px;" width="46" height="46" viewBox="0 0 46 46"><path d="M4,12 H42 M4,14 L32,44" fill="none" stroke="#ececec" stroke-width="2" stroke-linecap="round" stroke-linejoin="round"/><path d="M6,6 H16 M30,6 H40 M14,22 L20,28 M28,36 L34,42" stroke="#ee2f8e" stroke-width="1.4"/><text x="17" y="9" font-size="7" fill="#ececec" font-family="Liberation Mono">3M</text><text x="20" y="33" font-size="7" fill="#ececec" font-family="Liberation Mono" transform="rotate(45 22 30)">2M</text></svg>
<div style="position:absolute;left:2533px;top:1410.00px;font-size:24.1px;line-height:24.1px;color:#f2f2f2;font-weight:400;white-space:pre;font-family:'Liberation Sans', sans-serif;">Ruler</div>
<svg style="position:absolute;left:2472px;top:1398.5px;" width="46" height="46" viewBox="0 0 46 46"><path d="M22,12 A12,12 0 0 0 22,36" fill="none" stroke="#ee2f8e" stroke-width="2.6"/><path d="M22,2 V46" stroke="#ececec" stroke-width="2" stroke-dasharray="3,2"/><path d="M22,12 A12,12 0 0 1 22,36" fill="none" stroke="#ececec" stroke-width="2"/><path d="M28,9 L32,4 M33,15 L38,12 M34,24 H40 M32,32 L38,36 M27,38 L30,43" stroke="#ececec" stroke-width="1.8"/></svg>
<div style="position:absolute;left:1870px;top:1474.00px;font-size:24.1px;line-height:24.1px;color:#f2f2f2;font-weight:400;white-space:pre;font-family:'Liberation Sans', sans-serif;">Show handles</div>
<svg style="position:absolute;left:1807px;top:1462.5px;" width="46" height="46" viewBox="0 0 46 46"><polygon points="18.0,6.0 22.7,18.5 36.1,19.1 25.6,27.5 29.2,40.4 18.0,33.0 6.8,40.4 10.4,27.5 -0.1,19.1 13.3,18.5" fill="#ececec"/><path d="M18,4 L30,18 L42,16 M30,18 L22,30 L32,42 M22,30 L14,34" fill="none" stroke="#ececec" stroke-width="1.2"/><g fill="#ee2f8e" stroke="#ececec" stroke-width="1"><rect x="15.5" y="1.5" width="5" height="5" transform="rotate(45 18 4)"/><rect x="27.5" y="15.5" width="5" height="5" transform="rotate(45 30 18)"/><rect x="39.5" y="13.5" width="5" height="5" transform="rotate(45 42 16)"/><rect x="19.5" y="27.5" width="5" height="5" transform="rotate(45 22 30)"/><rect x="29.5" y="39.5" width="5" height="5" transform="rotate(45 32 42)"/><rect x="11.5" y="31.5" width="5" height="5" transform="rotate(45 14 34)"/></g></svg>
<div style="position:absolute;left:2201px;top:1474.00px;font-size:24.1px;line-height:24.1px;color:#f2f2f2;font-weight:400;white-space:pre;font-family:'Liberation Sans', sans-serif;">Spiro spline</div>
<svg style="position:absolute;left:2140px;top:1462.5px;" width="46" height="46" viewBox="0 0 46 46"><path d="M4,34 C2,20 12,10 20,16 C26,22 24,32 30,32 C36,30 34,22 40,22 C46,24 44,36 36,38 C28,40 24,40 20,36 C16,42 8,44 4,34 Z" fill="none" stroke="#ececec" stroke-width="2.4" stroke-linecap="round" stroke-linejoin="round" opacity="0"/><path d="M20,40 C10,44 4,40 4,32 C4,20 14,12 22,20 C28,26 28,36 36,38 C42,40 46,30 40,26" fill="none" stroke="#ececec" stroke-width="2.6" stroke-linecap="round" stroke-linejoin="round"/><rect x="18" y="37" width="6" height="6" fill="#ee2f8e" stroke="#ececec" stroke-width="1"/><rect x="35" y="23" width="6" height="6" fill="#ee2f8e" stroke="#ececec" stroke-width="1"/></svg>
<div style="position:absolute;left:2822px;top:491px;width:68px;height:1px;background:#2a2a2a"></div>
<div style="position:absolute;left:2822px;top:658px;width:68px;height:1px;background:#2a2a2a"></div>
<div style="position:absolute;left:2822px;top:826px;width:68px;height:1px;background:#2a2a2a"></div>
<div style="position:absolute;left:2822px;top:1064px;width:68px;height:1px;background:#2a2a2a"></div>
<div style="position:absolute;left:2822px;top:1372px;width:68px;height:1px;background:#2a2a2a"></div>
<svg style="position:absolute;left:1736px;top:218px;" width="44" height="36" viewBox="0 0 44 36"><path d="M8,6 H30 L26,11 H4 Z" fill="#2a9ee8"/><path d="M12,16 H34 L30,22 H8 Z" fill="#6ab8ec"/><path d="M16,26 H38 L34,32 H12 Z" fill="#ececec"/></svg>
<svg style="position:absolute;left:1866px;top:216px;" width="40" height="40" viewBox="0 0 40 40"><path d="M5,28 V4 H29" fill="none" stroke="#ececec" stroke-width="2.5"/><path d="M34,7 L22,25 L18,22 Z" fill="#ececec"/><path d="M19,23 L22,26 Q18,34 8,34 Q10,26 19,23 Z" fill="#2a9ee8"/></svg>
<svg style="position:absolute;left:1998px;top:218px;" width="34" height="34" viewBox="0 0 34 34"><path d="M4,6 H30 V13 H28 Q27,9 23,9 H19.5 V28 Q19.5,30 23,30 V31 H11 V30 Q14.5,30 14.5,28 V9 H11 Q7,9 6,13 H4 Z" fill="#ececec"/></svg>
<svg style="position:absolute;left:2122px;top:216px;" width="40" height="40" viewBox="0 0 40 40"><path d="M12,12 A13,13 0 1 1 20,33" fill="none" stroke="#ececec" stroke-width="3.5"/><path d="M4,14 L14,6 L14,18 Z" fill="#ececec" transform="rotate(-10 10 12)"/><circle cx="22" cy="20" r="4" fill="#1ea01e"/><rect x="3" y="26" width="11" height="10" fill="#ececec"/></svg>
<svg style="position:absolute;left:2250px;top:216px;" width="40" height="40" viewBox="0 0 40 40"><rect x="5" y="6" width="2.5" height="28" fill="#1ea01e"/><rect x="12" y="6" width="14" height="6" fill="#ececec"/><rect x="12" y="16" width="19" height="7" fill="#ececec"/><rect x="12" y="26" width="14" height="6" fill="#ececec"/></svg>
<svg style="position:absolute;left:2360px;top:214px;" width="48" height="44" viewBox="0 0 48 44"><path d="M13,38 C12,28 16,22 22,18 C27,15 30,13 34,9" fill="none" stroke="#ececec" stroke-width="3.6"/><path d="M15,27 C10,22 11,17 14,13 M19,22 C17,16 19,12 23,10 M19,30 C25,30 29,26 30,20" fill="none" stroke="#ececec" stroke-width="3"/><circle cx="34" cy="9" r="4.2" fill="#ececec"/><circle cx="13" cy="38" r="4.2" fill="#ececec"/></svg>
<svg style="position:absolute;left:2408px;top:222px;" width="26" height="26" viewBox="0 0 26 26"><path d="M5,5 L21,21 M21,5 L5,21" stroke="#9a9a9a" stroke-width="3.5"/></svg>
<svg style="position:absolute;left:2512px;top:214px;" width="44" height="44" viewBox="0 0 44 44"><path d="M13,11 L34,30" stroke="#1a9a1a" stroke-width="6"/><circle cx="12" cy="10" r="7" fill="#1a9a1a"/><circle cx="35" cy="31" r="7" fill="#1a9a1a"/><rect x="7" y="1" width="6" height="9" fill="#262626" transform="rotate(-45 12 10)"/><rect x="32" y="31" width="6" height="9" fill="#262626" transform="rotate(-45 35 31)"/><rect x="6" y="24" width="14" height="14" fill="#ececec"/></svg>
<svg style="position:absolute;left:2642px;top:216px;" width="42" height="40" viewBox="0 0 42 40"><path d="M24,16 V11 L17,4 H4 V35 H24 V27" fill="none" stroke="#ececec" stroke-width="3.6" stroke-linejoin="round"/><path d="M17,4 V11 H24" fill="none" stroke="#ececec" stroke-width="3"/><path d="M14,19 H28 V14 L36,21.5 L28,29 V24 H14 Z" fill="#1a9a1a"/></svg>
<svg style="position:absolute;left:2832.0px;top:213.0px;" width="44" height="44" viewBox="0 0 44 44"><g transform="translate(3,3)"><path d="M5,4 H21 L29,12 V38 H5 Z" fill="none" stroke="#ececec" stroke-width="3.6" stroke-linejoin="round"/><path d="M20,4 V13 H29" fill="none" stroke="#ececec" stroke-width="3.4"/></g><path d="M37,2 L39,7.5 L44,7.5 L40,11 L41.5,16 L37,13 L32.5,16 L34,11 L30,7.5 L35,7.5 Z" fill="#1a9a1a"/></svg>
<svg style="position:absolute;left:2832.0px;top:281.6px;" width="44" height="40" viewBox="0 0 44 40"><path d="M4,4 H17 L20,9 H35 V14 H12 L4,34 Z" fill="#ececec"/><path d="M11,17 H41 L35,36 H4 Z" fill="#ececec"/></svg>
<svg style="position:absolute;left:2834.0px;top:350.0px;" width="40" height="46" viewBox="0 0 40 46"><path d="M16,2 H24 V12 H30 L20,22 L10,12 H16 Z" fill="#1a9a1a"/><path d="M3,26 L8,18 H11 L7,26 H13 V31 H27 V26 H33 L29,18 H32 L37,26 V42 H3 Z" fill="#ececec"/></svg>
<svg style="position:absolute;left:2834.0px;top:421.0px;" width="40" height="40" viewBox="0 0 40 40"><rect x="10" y="3" width="20" height="7" fill="#ececec"/><path d="M3,14 Q3,11 6,11 H34 Q37,11 37,14 V28 H32 V22 H8 V28 H3 Z" fill="#bdbdbd"/><rect x="10" y="24" width="20" height="13" fill="#ececec"/></svg>
<svg style="position:absolute;left:2832.0px;top:516.0px;" width="44" height="44" viewBox="0 0 44 44"><path d="M12,14 V4 H26 L34,12 V40 H12 V30" fill="none" stroke="#ececec" stroke-width="3.6" stroke-linejoin="round"/><path d="M25,4 V13 H34" fill="none" stroke="#ececec" stroke-width="3.4"/><path d="M3,19 H16 V14 L24,21.5 L16,29 V24 H3 Z" fill="#1a9a1a"/></svg>
<svg style="position:absolute;left:2831.0px;top:587.0px;" width="46" height="44" viewBox="0 0 46 44"><path d="M27,16 V12 L19,4 H5 V40 H27 V28" fill="none" stroke="#ececec" stroke-width="3.6" stroke-linejoin="round"/><path d="M18,4 V13 H27" fill="none" stroke="#ececec" stroke-width="3.4"/><path d="M17,19 H32 V14 L41,21.5 L32,29 V24 H17 Z" fill="#1a9a1a"/></svg>
<svg style="position:absolute;left:2834.0px;top:690.0px;" width="40" height="34" viewBox="0 0 40 34"><path d="M14,5 L4,13 L14,21 Z" fill="#ececec"/><path d="M12,13 H24 Q32,13 32,21 Q32,28 25,28" fill="none" stroke="#ececec" stroke-width="4.5"/></svg>
<svg style="position:absolute;left:2834.0px;top:759.0px;" width="40" height="34" viewBox="0 0 40 34"><path d="M26,5 L36,13 L26,21 Z" fill="#8c8c8c"/><path d="M28,13 H16 Q8,13 8,21 Q8,28 14,28" fill="none" stroke="#8c8c8c" stroke-width="4.5"/></svg>
<svg style="position:absolute;left:2833.0px;top:855.0px;" width="42" height="42" viewBox="0 0 42 42"><rect x="3" y="3" width="24" height="24" fill="#ececec"/><rect x="13" y="13" width="27" height="27" fill="#333"/><rect x="15" y="15" width="24" height="24" fill="#ececec"/></svg>
<svg style="position:absolute;left:2833.0px;top:924.0px;" width="42" height="44" viewBox="0 0 42 44"><path d="M9,2 L25,29 M33,2 L17,29" stroke="#ececec" stroke-width="4.2"/><circle cx="11" cy="34" r="6.5" fill="none" stroke="#ececec" stroke-width="4"/><circle cx="31" cy="34" r="6.5" fill="none" stroke="#ececec" stroke-width="4"/></svg>
<svg style="position:absolute;left:2834.0px;top:995.0px;" width="40" height="44" viewBox="0 0 40 44"><path d="M8,9 H5 V40 H36 V9 H33" fill="none" stroke="#ececec" stroke-width="2.6"/><rect x="13" y="4" width="15" height="7" fill="#ececec"/><path d="M9,13 H32 V32 L28,36 H9 Z" fill="#ececec"/></svg>
<svg style="position:absolute;left:2832.0px;top:1091.5px;" width="44" height="44" viewBox="0 0 44 44"><circle cx="19" cy="19" r="17" fill="#ececec"/><path d="M31,31 L40,40" stroke="#ececec" stroke-width="5.5" stroke-linecap="round"/><rect x="9" y="9" width="20" height="20" fill="none" stroke="#333" stroke-width="2.2" stroke-dasharray="2.2,2.2"/></svg>
<svg style="position:absolute;left:2832.0px;top:1162.0px;" width="44" height="44" viewBox="0 0 44 44"><circle cx="19" cy="19" r="17" fill="#ececec"/><path d="M31,31 L40,40" stroke="#ececec" stroke-width="5.5" stroke-linecap="round"/><circle cx="15" cy="16" r="7" fill="#333"/><rect x="15" y="17" width="13" height="13" fill="#333"/></svg>
<svg style="position:absolute;left:2832.0px;top:1231.0px;" width="44" height="44" viewBox="0 0 44 44"><circle cx="19" cy="19" r="17" fill="#ececec"/><path d="M31,31 L40,40" stroke="#ececec" stroke-width="5.5" stroke-linecap="round"/><rect x="11" y="7" width="16" height="24" fill="none" stroke="#333" stroke-width="2.5"/></svg>
<svg style="position:absolute;left:2832.0px;top:1300.0px;" width="44" height="44" viewBox="0 0 44 44"><path d="M3,10 V3 H10 M34,3 H41 V10 M41,34 V41 H34 M10,41 H3 V34" fill="none" stroke="#9a9a9a" stroke-width="2.5"/><rect x="9" y="9" width="26" height="26" fill="none" stroke="#ececec" stroke-width="2.6"/><path d="M22,15 V29 M15,22 H29" stroke="#ececec" stroke-width="2.6"/></svg>
<svg style="position:absolute;left:2832.0px;top:1404.0px;" width="44" height="44" viewBox="0 0 44 44"><rect x="3" y="3" width="25" height="23" fill="#ececec"/><rect x="12" y="13" width="29" height="28" fill="#333"/><rect x="14" y="15" width="27" height="25" fill="#149614"/></svg>
<svg style="position:absolute;left:2832.0px;top:1471.0px;" width="44" height="44" viewBox="0 0 44 44"><rect x="3" y="3" width="25" height="23" fill="#ececec"/><rect x="12" y="13" width="29" height="28" fill="#333"/><rect x="14" y="15" width="27" height="26" fill="#ececec"/><rect x="20" y="26" width="15" height="11" fill="#333"/><path d="M23,26 V22 A4.5,4.5 0 0 1 32,22 V26" fill="none" stroke="#333" stroke-width="2.6"/></svg>
<svg style="position:absolute;left:2832.0px;top:1540.0px;" width="44" height="44" viewBox="0 0 44 44"><rect x="3" y="3" width="25" height="23" fill="#ececec"/><rect x="12" y="13" width="29" height="28" fill="#333"/><rect x="14" y="15" width="27" height="26" fill="#ececec"/><rect x="19" y="27" width="13" height="10" fill="#333"/><path d="M28,27 V22 A4.5,4.5 0 0 1 37,22 V24" fill="none" stroke="#333" stroke-width="2.6"/></svg>
<div style="position:absolute;left:24px;top:51px;width:440px;height:1207px;background:linear-gradient(#dcdcdc 0px,#d2d2d2 45px,#c6c6c6 105px,#c4c4c4 170px,#d6d6d6 260px,#e3e3e3 360px,#e9e9e9 470px,#ebebeb 900px,#ececec 1207px);border-radius:14px;box-shadow:0 12px 36px rgba(0,0,0,0.22),0 0 0 1px rgba(0,0,0,0.10)"></div>
<svg width="0" height="0" style="position:absolute"><defs>
<symbol id="cmd" viewBox="0 0 24 24"><path d="M9,9 V6 A3,3 0 1 0 6,9 H18 A3,3 0 1 0 15,6 V18 A3,3 0 1 0 18,15 H6 A3,3 0 1 0 9,18 Z" fill="none" stroke="currentColor" stroke-width="1.8"/></symbol>
<symbol id="shift" viewBox="0 0 24 24"><path d="M12,3 L2.5,12.5 H7.5 V21 H16.5 V12.5 H21.5 Z" fill="none" stroke="currentColor" stroke-width="2" stroke-linejoin="round"/></symbol>
<symbol id="opt" viewBox="0 0 24 24"><path d="M2,5 H8.5 L15.5,19 H22 M14,5 H22" fill="none" stroke="currentColor" stroke-width="2.2"/></symbol>
</defs></svg>
<div style="position:absolute;left:52px;top:201.5px;width:383px;height:2.0px;background:#c4c4c4"></div>
<div style="position:absolute;left:52px;top:488px;width:383px;height:2px;background:#c4c4c4"></div>
<div style="position:absolute;left:52px;top:730px;width:383px;height:2px;background:#c4c4c4"></div>
<div style="position:absolute;left:52px;top:928px;width:383px;height:2px;background:#c4c4c4"></div>
<div style="position:absolute;left:52px;top:994px;width:383px;height:2px;background:#c4c4c4"></div>
<div style="position:absolute;left:52px;top:1105px;width:383px;height:2px;background:#c4c4c4"></div>
<div style="position:absolute;left:34px;top:1116px;width:420px;height:44px;background:linear-gradient(90deg,#3a8ef6,#4c9af7 60%,#5ea5f6);border-radius:8px"></div>
<div style="position:absolute;left:52.4px;top:69.69px;font-size:26px;line-height:26px;color:#1f1f1f;font-weight:400;white-space:pre;font-family:'Liberation Sans', sans-serif;letter-spacing:0.55px;-webkit-text-stroke:0.35px currentColor">Object to Path</div>
<svg style="position:absolute;left:360.5px;top:71.5px;color:#adadad" width="24" height="24"><use href="#shift"/></svg><svg style="position:absolute;left:388.5px;top:71.5px;color:#adadad" width="24" height="24"><use href="#cmd"/></svg><div style="position:absolute;left:417.5px;top:70.69px;font-size:26px;line-height:26px;color:#adadad;font-weight:400;white-space:pre;font-family:'Liberation Sans', sans-serif;">C</div>
<div style="position:absolute;left:52.4px;top:113.19px;font-size:26px;line-height:26px;color:#1f1f1f;font-weight:400;white-space:pre;font-family:'Liberation Sans', sans-serif;letter-spacing:0.55px;-webkit-text-stroke:0.35px currentColor">Stroke to Path</div>
<svg style="position:absolute;left:360.5px;top:115.0px;color:#adadad" width="24" height="24"><use href="#opt"/></svg><svg style="position:absolute;left:388.5px;top:115.0px;color:#adadad" width="24" height="24"><use href="#cmd"/></svg><div style="position:absolute;left:417.5px;top:114.19px;font-size:26px;line-height:26px;color:#adadad;font-weight:400;white-space:pre;font-family:'Liberation Sans', sans-serif;">C</div>
<div style="position:absolute;left:52.4px;top:157.19px;font-size:26px;line-height:26px;color:#1f1f1f;font-weight:400;white-space:pre;font-family:'Liberation Sans', sans-serif;letter-spacing:0.55px;-webkit-text-stroke:0.35px currentColor">Trace Bitmap...</div>
<svg style="position:absolute;left:360.5px;top:159.0px;color:#adadad" width="24" height="24"><use href="#opt"/></svg><svg style="position:absolute;left:388.5px;top:159.0px;color:#adadad" width="24" height="24"><use href="#shift"/></svg><div style="position:absolute;left:417.5px;top:158.19px;font-size:26px;line-height:26px;color:#adadad;font-weight:400;white-space:pre;font-family:'Liberation Sans', sans-serif;">B</div>
<div style="position:absolute;left:97px;top:223.19px;font-size:26px;line-height:26px;color:#1f1f1f;font-weight:400;white-space:pre;font-family:'Liberation Sans', sans-serif;letter-spacing:0.55px;-webkit-text-stroke:0.35px currentColor">Union</div>
<svg style="position:absolute;left:52px;top:221px;" width="32" height="32" viewBox="0 0 32 32"><circle cx="11" cy="12" r="10.7" fill="#000"/><rect x="10" y="9" width="20" height="20" fill="#000"/></svg>
<svg style="position:absolute;left:388.5px;top:225.0px;color:#adadad" width="24" height="24"><use href="#cmd"/></svg><div style="position:absolute;left:417.5px;top:224.19px;font-size:26px;line-height:26px;color:#adadad;font-weight:400;white-space:pre;font-family:'Liberation Sans', sans-serif;">+</div>
<div style="position:absolute;left:97px;top:267.19px;font-size:26px;line-height:26px;color:#1f1f1f;font-weight:400;white-space:pre;font-family:'Liberation Sans', sans-serif;letter-spacing:0.55px;-webkit-text-stroke:0.35px currentColor">Difference</div>
<svg style="position:absolute;left:52px;top:265px;" width="32" height="32" viewBox="0 0 32 32"><rect x="10" y="9" width="20" height="20" fill="#000"/><circle cx="11" cy="10.5" r="11" fill="#eaad74"/></svg>
<svg style="position:absolute;left:388.5px;top:269.0px;color:#adadad" width="24" height="24"><use href="#cmd"/></svg><div style="position:absolute;left:417.5px;top:268.19px;font-size:26px;line-height:26px;color:#adadad;font-weight:400;white-space:pre;font-family:'Liberation Sans', sans-serif;">−</div>
<div style="position:absolute;left:97px;top:311.19px;font-size:26px;line-height:26px;color:#1f1f1f;font-weight:400;white-space:pre;font-family:'Liberation Sans', sans-serif;letter-spacing:0.55px;-webkit-text-stroke:0.35px currentColor">Intersection</div>
<svg style="position:absolute;left:52px;top:309px;" width="32" height="32" viewBox="0 0 32 32"><defs><clipPath id="ci325"><circle cx="11" cy="10.5" r="11"/></clipPath></defs><circle cx="11" cy="10.5" r="11" fill="#eaad74"/><rect x="10" y="9" width="20" height="20" fill="#eaad74"/><rect x="10" y="9" width="20" height="20" fill="#000" clip-path="url(#ci325)"/></svg>
<svg style="position:absolute;left:388.5px;top:313.0px;color:#adadad" width="24" height="24"><use href="#cmd"/></svg><div style="position:absolute;left:417.5px;top:312.19px;font-size:26px;line-height:26px;color:#adadad;font-weight:400;white-space:pre;font-family:'Liberation Sans', sans-serif;">*</div>
<div style="position:absolute;left:97px;top:355.19px;font-size:26px;line-height:26px;color:#1f1f1f;font-weight:400;white-space:pre;font-family:'Liberation Sans', sans-serif;letter-spacing:0.55px;-webkit-text-stroke:0.35px currentColor">Exclusion</div>
<svg style="position:absolute;left:52px;top:353px;" width="32" height="32" viewBox="0 0 32 32"><defs><clipPath id="ci369"><circle cx="11" cy="10.5" r="11"/></clipPath></defs><circle cx="11" cy="10.5" r="11" fill="#000"/><rect x="10" y="9" width="20" height="20" fill="#000"/><rect x="10" y="9" width="20" height="20" fill="#eaad74" clip-path="url(#ci369)"/></svg>
<svg style="position:absolute;left:388.5px;top:357.0px;color:#adadad" width="24" height="24"><use href="#cmd"/></svg><div style="position:absolute;left:417.5px;top:356.19px;font-size:26px;line-height:26px;color:#adadad;font-weight:400;white-space:pre;font-family:'Liberation Sans', sans-serif;">^</div>
<div style="position:absolute;left:97px;top:399.19px;font-size:26px;line-height:26px;color:#1f1f1f;font-weight:400;white-space:pre;font-family:'Liberation Sans', sans-serif;letter-spacing:0.55px;-webkit-text-stroke:0.35px currentColor">Division</div>
<svg style="position:absolute;left:52px;top:397px;" width="32" height="32" viewBox="0 0 32 32"><circle cx="11" cy="10.5" r="11" fill="#eaad74"/><rect x="10" y="9" width="20" height="20" fill="#000"/><defs><clipPath id="ci413"><rect x="10" y="9" width="20" height="20"/></clipPath></defs><circle cx="11" cy="10.5" r="9.5" fill="none" stroke="#fff" stroke-width="2" clip-path="url(#ci413)"/><defs><clipPath id="cj413"><path d="M0,0 H10 V9 H32 V0 Z M0,0 V32 H10 V0Z"/></clipPath></defs></svg>
<svg style="position:absolute;left:388.5px;top:401.0px;color:#adadad" width="24" height="24"><use href="#cmd"/></svg><div style="position:absolute;left:417.5px;top:400.19px;font-size:26px;line-height:26px;color:#adadad;font-weight:400;white-space:pre;font-family:'Liberation Sans', sans-serif;">/</div>
<div style="position:absolute;left:97px;top:443.19px;font-size:26px;line-height:26px;color:#1f1f1f;font-weight:400;white-space:pre;font-family:'Liberation Sans', sans-serif;letter-spacing:0.55px;-webkit-text-stroke:0.35px currentColor">Cut Path</div>
<svg style="position:absolute;left:52px;top:441px;" width="32" height="32" viewBox="0 0 32 32"><rect x="10.5" y="9.5" width="21" height="21" fill="none" stroke="#000" stroke-width="2"/><circle cx="11" cy="10.5" r="9.5" fill="#e6e6e6" fill-opacity="0"/><circle cx="11" cy="10.5" r="9" fill="none" stroke="#eaad74" stroke-width="3"/><path d="M10.5,20 V9.5 H20" fill="none" stroke="#000" stroke-width="2"/></svg>
<svg style="position:absolute;left:360.5px;top:445.0px;color:#adadad" width="24" height="24"><use href="#opt"/></svg><svg style="position:absolute;left:388.5px;top:445.0px;color:#adadad" width="24" height="24"><use href="#cmd"/></svg><div style="position:absolute;left:417.5px;top:444.19px;font-size:26px;line-height:26px;color:#adadad;font-weight:400;white-space:pre;font-family:'Liberation Sans', sans-serif;">/</div>
<div style="position:absolute;left:97px;top:509.19px;font-size:26px;line-height:26px;color:#1f1f1f;font-weight:400;white-space:pre;font-family:'Liberation Sans', sans-serif;letter-spacing:0.55px;-webkit-text-stroke:0.35px currentColor">Combine</div>
<svg style="position:absolute;left:52px;top:507px;" width="32" height="32" viewBox="0 0 32 32"><circle cx="11" cy="10.5" r="9.7" fill="none" stroke="#000" stroke-width="2"/><rect x="10.5" y="9.5" width="21" height="21" fill="none" stroke="#000" stroke-width="2"/></svg>
<svg style="position:absolute;left:388.5px;top:511.0px;color:#adadad" width="24" height="24"><use href="#cmd"/></svg><div style="position:absolute;left:417.5px;top:510.19px;font-size:26px;line-height:26px;color:#adadad;font-weight:400;white-space:pre;font-family:'Liberation Sans', sans-serif;">K</div>
<div style="position:absolute;left:97px;top:553.19px;font-size:26px;line-height:26px;color:#1f1f1f;font-weight:400;white-space:pre;font-family:'Liberation Sans', sans-serif;letter-spacing:0.55px;-webkit-text-stroke:0.35px currentColor">Break Apart</div>
<svg style="position:absolute;left:52px;top:551px;" width="32" height="32" viewBox="0 0 32 32"><path d="M20.7,10.5 A9.7,9.7 0 1 1 11,0.8 A9.7,9.7 0 0 1 20.7,10.5" fill="none" stroke="#000" stroke-width="2"/><path d="M10.5,16 V9.5 H16" fill="none" stroke="#000" stroke-width="2"/><path d="M21,9.5 H31.5 V30.5 H10.5 V21" fill="none" stroke="#000" stroke-width="2"/></svg>
<svg style="position:absolute;left:360.5px;top:555.0px;color:#adadad" width="24" height="24"><use href="#shift"/></svg><svg style="position:absolute;left:388.5px;top:555.0px;color:#adadad" width="24" height="24"><use href="#cmd"/></svg><div style="position:absolute;left:417.5px;top:554.19px;font-size:26px;line-height:26px;color:#adadad;font-weight:400;white-space:pre;font-family:'Liberation Sans', sans-serif;">K</div>
<div style="position:absolute;left:97px;top:597.19px;font-size:26px;line-height:26px;color:#1f1f1f;font-weight:400;white-space:pre;font-family:'Liberation Sans', sans-serif;letter-spacing:0.55px;-webkit-text-stroke:0.35px currentColor">Split Path</div>
<svg style="position:absolute;left:52px;top:595px;" width="32" height="32" viewBox="0 0 32 32"><circle cx="9.5" cy="8.5" r="7.5" fill="none" stroke="#000" stroke-width="2.2"/><circle cx="22" cy="21" r="7.5" fill="none" stroke="#000" stroke-width="2.2"/></svg>
<svg style="position:absolute;left:332.5px;top:599.0px;color:#adadad" width="24" height="24"><use href="#opt"/></svg><svg style="position:absolute;left:360.5px;top:599.0px;color:#adadad" width="24" height="24"><use href="#shift"/></svg><svg style="position:absolute;left:388.5px;top:599.0px;color:#adadad" width="24" height="24"><use href="#cmd"/></svg><div style="position:absolute;left:417.5px;top:598.19px;font-size:26px;line-height:26px;color:#adadad;font-weight:400;white-space:pre;font-family:'Liberation Sans', sans-serif;">K</div>
<div style="position:absolute;left:97px;top:641.19px;font-size:26px;line-height:26px;color:#1f1f1f;font-weight:400;white-space:pre;font-family:'Liberation Sans', sans-serif;letter-spacing:0.55px;-webkit-text-stroke:0.35px currentColor">Fracture</div>
<svg style="position:absolute;left:52px;top:639px;" width="32" height="32" viewBox="0 0 32 32"><circle cx="11" cy="10.5" r="11" fill="#f08a1a"/><rect x="10" y="9" width="20" height="20" fill="#000"/><defs><clipPath id="ci655"><rect x="10" y="9" width="20" height="20"/></clipPath></defs><circle cx="11" cy="10.5" r="9.5" fill="none" stroke="#fff" stroke-width="2" clip-path="url(#ci655)"/></svg>
<svg style="position:absolute;left:360.5px;top:643.0px;color:#adadad" width="24" height="24"><use href="#opt"/></svg><svg style="position:absolute;left:388.5px;top:643.0px;color:#adadad" width="24" height="24"><use href="#shift"/></svg><div style="position:absolute;left:417.5px;top:642.19px;font-size:26px;line-height:26px;color:#adadad;font-weight:400;white-space:pre;font-family:'Liberation Sans', sans-serif;">F</div>
<div style="position:absolute;left:97px;top:685.19px;font-size:26px;line-height:26px;color:#1f1f1f;font-weight:400;white-space:pre;font-family:'Liberation Sans', sans-serif;letter-spacing:0.55px;-webkit-text-stroke:0.35px currentColor">Flatten</div>
<svg style="position:absolute;left:52px;top:683px;" width="32" height="32" viewBox="0 0 32 32"><rect x="2" y="10" width="20" height="20" fill="#000"/><circle cx="21.5" cy="12.5" r="11" fill="#e6e6e6"/><circle cx="21.5" cy="12.5" r="9.3" fill="#000"/></svg>
<svg style="position:absolute;left:388.5px;top:687.0px;color:#adadad" width="24" height="24"><use href="#shift"/></svg><div style="position:absolute;left:417.5px;top:686.19px;font-size:26px;line-height:26px;color:#adadad;font-weight:400;white-space:pre;font-family:'Liberation Sans', sans-serif;">F</div>
<div style="position:absolute;left:97px;top:751.19px;font-size:26px;line-height:26px;color:#1f1f1f;font-weight:400;white-space:pre;font-family:'Liberation Sans', sans-serif;letter-spacing:0.55px;-webkit-text-stroke:0.35px currentColor">Inset</div>
<svg style="position:absolute;left:52px;top:749px;" width="32" height="32" viewBox="0 0 32 32"><path d="M0,2 A29,29 0 0 1 29,31" fill="none" stroke="#8a8a8a" stroke-width="3.2"/><path d="M0,20.5 A11,11 0 0 1 11,31.5" fill="none" stroke="#000" stroke-width="3.6"/><path d="M13.1,10.4 L13.1,20.5 L24,20.5 Z" fill="#5aa020"/></svg>
<svg style="position:absolute;left:388.5px;top:753.0px;color:#adadad" width="24" height="24"><use href="#cmd"/></svg><div style="position:absolute;left:417.5px;top:752.19px;font-size:26px;line-height:26px;color:#adadad;font-weight:400;white-space:pre;font-family:'Liberation Sans', sans-serif;">(</div>
<div style="position:absolute;left:97px;top:795.19px;font-size:26px;line-height:26px;color:#1f1f1f;font-weight:400;white-space:pre;font-family:'Liberation Sans', sans-serif;letter-spacing:0.55px;-webkit-text-stroke:0.35px currentColor">Outset</div>
<svg style="position:absolute;left:52px;top:793px;" width="32" height="32" viewBox="0 0 32 32"><path d="M0,2 A29,29 0 0 1 29,31" fill="none" stroke="#000" stroke-width="3.4"/><path d="M0,20.5 A11,11 0 0 1 11,31.5" fill="none" stroke="#999" stroke-width="3.6"/><path d="M5.6,13.3 L18.1,13.3 L18.1,24.1 Z" fill="#5aa020"/></svg>
<svg style="position:absolute;left:388.5px;top:797.0px;color:#adadad" width="24" height="24"><use href="#cmd"/></svg><div style="position:absolute;left:417.5px;top:796.19px;font-size:26px;line-height:26px;color:#adadad;font-weight:400;white-space:pre;font-family:'Liberation Sans', sans-serif;">)</div>
<div style="position:absolute;left:97px;top:839.19px;font-size:26px;line-height:26px;color:#1f1f1f;font-weight:400;white-space:pre;font-family:'Liberation Sans', sans-serif;letter-spacing:0.55px;-webkit-text-stroke:0.35px currentColor">Dynamic Offset</div>
<svg style="position:absolute;left:52px;top:837px;" width="32" height="32" viewBox="0 0 32 32"><path d="M0,2 A29,29 0 0 1 29,31" fill="none" stroke="#000" stroke-width="3.4"/><path d="M0,11 A20,20 0 0 1 20,31" fill="none" stroke="#999" stroke-width="3.4"/><path d="M0,20.5 A11,11 0 0 1 11,31.5" fill="none" stroke="#000" stroke-width="3.6"/></svg>
<svg style="position:absolute;left:388.5px;top:841.0px;color:#adadad" width="24" height="24"><use href="#cmd"/></svg><div style="position:absolute;left:417.5px;top:840.19px;font-size:26px;line-height:26px;color:#adadad;font-weight:400;white-space:pre;font-family:'Liberation Sans', sans-serif;">J</div>
<div style="position:absolute;left:97px;top:883.19px;font-size:26px;line-height:26px;color:#1f1f1f;font-weight:400;white-space:pre;font-family:'Liberation Sans', sans-serif;letter-spacing:0.55px;-webkit-text-stroke:0.35px currentColor">Linked Offset</div>
<svg style="position:absolute;left:52px;top:881px;" width="32" height="32" viewBox="0 0 32 32"><path d="M0,2 A30,30 0 0 1 30,30" fill="none" stroke="#000" stroke-width="3"/><path d="M0,11 A20,20 0 0 1 21,30" fill="none" stroke="#999" stroke-width="3"/><path d="M0,20 A11,11 0 0 1 12,30" fill="none" stroke="#999" stroke-width="3"/><rect x="12" y="0" width="18" height="21" fill="#000"/><rect x="16" y="9" width="10" height="8" fill="#fff"/><path d="M18,9.5 V6.5 A3,3 0 0 1 24,6.5 V9.5" fill="none" stroke="#fff" stroke-width="2"/></svg>
<svg style="position:absolute;left:360.5px;top:885.0px;color:#adadad" width="24" height="24"><use href="#opt"/></svg><svg style="position:absolute;left:388.5px;top:885.0px;color:#adadad" width="24" height="24"><use href="#cmd"/></svg><div style="position:absolute;left:417.5px;top:884.19px;font-size:26px;line-height:26px;color:#adadad;font-weight:400;white-space:pre;font-family:'Liberation Sans', sans-serif;">J</div>
<div style="position:absolute;left:52.4px;top:949.19px;font-size:26px;line-height:26px;color:#1f1f1f;font-weight:400;white-space:pre;font-family:'Liberation Sans', sans-serif;letter-spacing:0.55px;-webkit-text-stroke:0.35px currentColor">Fill between paths</div>
<div style="position:absolute;left:52.4px;top:1015.19px;font-size:26px;line-height:26px;color:#1f1f1f;font-weight:400;white-space:pre;font-family:'Liberation Sans', sans-serif;letter-spacing:0.55px;-webkit-text-stroke:0.35px currentColor">Simplify</div>
<svg style="position:absolute;left:388.5px;top:1017.0px;color:#adadad" width="24" height="24"><use href="#cmd"/></svg><div style="position:absolute;left:417.5px;top:1016.19px;font-size:26px;line-height:26px;color:#adadad;font-weight:400;white-space:pre;font-family:'Liberation Sans', sans-serif;">L</div>
<div style="position:absolute;left:52.4px;top:1059.19px;font-size:26px;line-height:26px;color:#1f1f1f;font-weight:400;white-space:pre;font-family:'Liberation Sans', sans-serif;letter-spacing:0.55px;-webkit-text-stroke:0.35px currentColor">Reverse</div>
<div style="position:absolute;left:52.4px;top:1124.69px;font-size:26px;line-height:26px;color:#fff;font-weight:400;white-space:pre;font-family:'Liberation Sans', sans-serif;letter-spacing:0.55px;-webkit-text-stroke:0.35px currentColor">Path Effects...</div>
<svg style="position:absolute;left:388.5px;top:1126.5px;color:#fff" width="24" height="24"><use href="#cmd"/></svg><div style="position:absolute;left:417.5px;top:1125.69px;font-size:26px;line-height:26px;color:#fff;font-weight:400;white-space:pre;font-family:'Liberation Sans', sans-serif;">&</div>
<div style="position:absolute;left:52.4px;top:1169.19px;font-size:26px;line-height:26px;color:#1f1f1f;font-weight:400;white-space:pre;font-family:'Liberation Sans', sans-serif;letter-spacing:0.55px;-webkit-text-stroke:0.35px currentColor">Paste Path Effect</div>
<div style="position:absolute;left:417.5px;top:1170.19px;font-size:26px;line-height:26px;color:#adadad;font-weight:400;white-space:pre;font-family:'Liberation Sans', sans-serif;">&</div>
<div style="position:absolute;left:52.4px;top:1213.19px;font-size:26px;line-height:26px;color:#1f1f1f;font-weight:400;white-space:pre;font-family:'Liberation Sans', sans-serif;letter-spacing:0.55px;-webkit-text-stroke:0.35px currentColor">Remove Path Effect</div>
<svg style="position:absolute;left:470px;top:1110px;" width="150" height="45" viewBox="0 0 150 45"><path d="M7.7,22 L31.6,10 L31.6,34 Z" fill="#10ee10"/><rect x="30" y="20.6" width="108" height="4.4" fill="#10ee10"/></svg>
<div style="position:absolute;left:633px;top:1084.40px;font-size:77.5px;line-height:77.5px;color:#0cd80c;font-weight:700;white-space:pre;font-family:'Liberation Sans', sans-serif;-webkit-text-stroke:2.5px #0cd80c">1</div>
<svg style="position:absolute;left:2740px;top:360px;" width="40" height="72" viewBox="0 0 40 72"><path d="M14,5 L7.8,31.8 L32.1,25.7 Z" fill="#10e810"/><path d="M20,27 L26.7,67.5" stroke="#10e810" stroke-width="5.2"/></svg>
<div style="position:absolute;left:2761px;top:432.28px;font-size:80px;line-height:80px;color:#10e010;font-weight:700;white-space:pre;font-family:'Liberation Sans', sans-serif;-webkit-text-stroke:3px #10e010;transform:scaleX(1.12);transform-origin:0 0">2</div>
</body></html>
